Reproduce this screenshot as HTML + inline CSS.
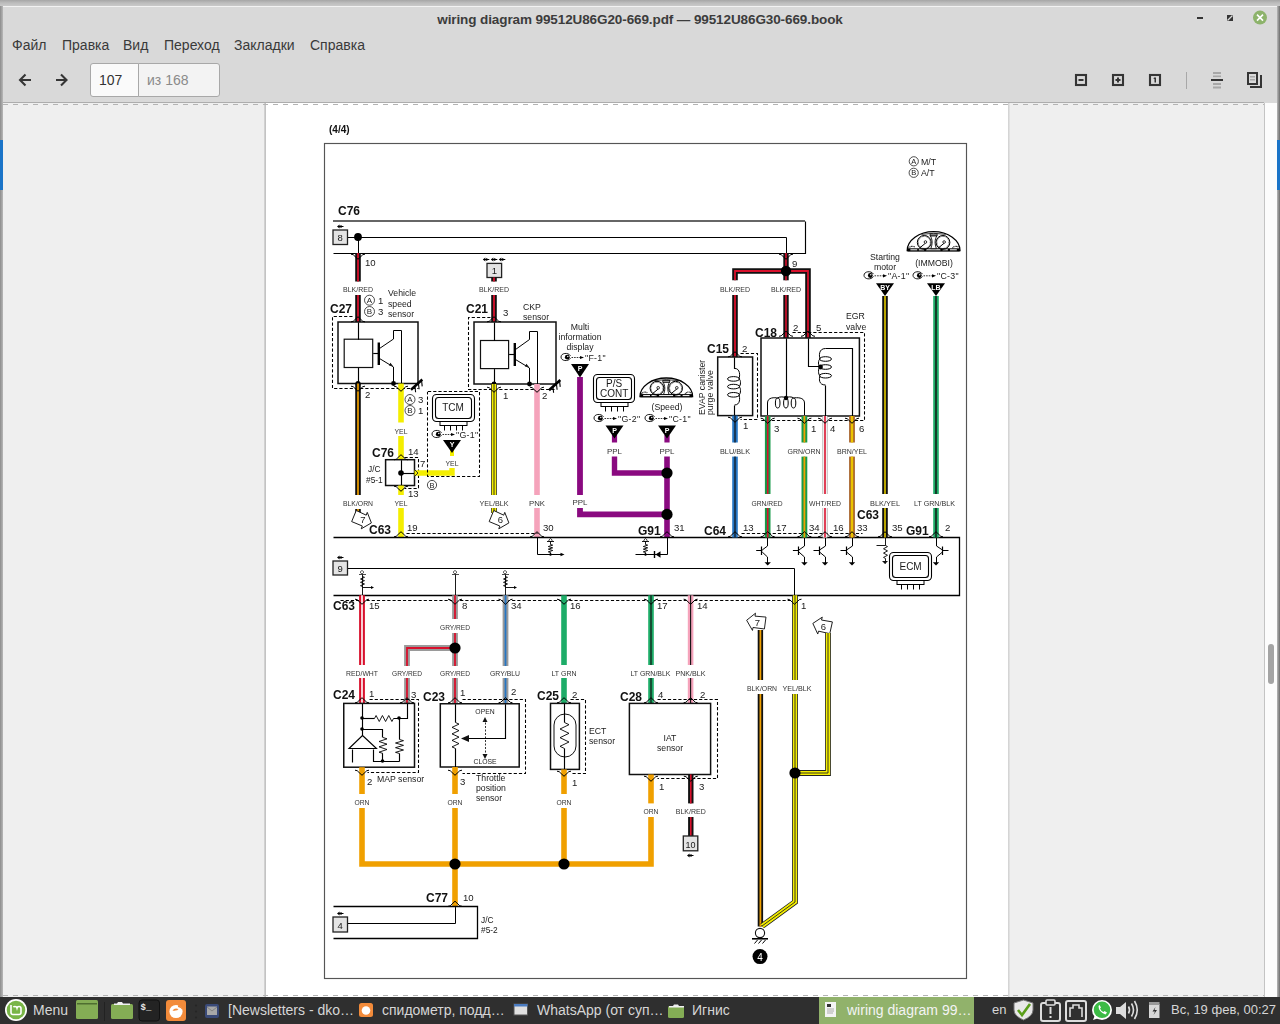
<!DOCTYPE html>
<html><head><meta charset="utf-8">
<style>
*{margin:0;padding:0;box-sizing:border-box}
html,body{width:1280px;height:1024px;overflow:hidden;background:#9a9a9a;font-family:"Liberation Sans",sans-serif}
.abs{position:absolute}
#desk{left:0;top:0;width:1280px;height:1024px;background:linear-gradient(#a6a6a6,#bdbdbd 3px,#c9c9c9 6px)}
#blueL{left:0;top:140px;width:3px;height:50px;background:#1a74c8}
#blueR{left:1277px;top:140px;width:3px;height:50px;background:#1a74c8}
#sideL{left:0;top:6px;width:3px;height:991px;background:linear-gradient(90deg,#8c8c8c,#b8b8b8)}
#sideR{left:1277px;top:6px;width:3px;height:991px;background:linear-gradient(90deg,#b8b8b8,#6c6c6c)}
#win{left:3px;top:6px;width:1274px;height:991px;background:#d9d9d9;border-top:1px solid #f2f2f2}
#title{left:0;top:12px;width:1280px;text-align:center;font-weight:bold;font-size:13.5px;color:#3c3c3c;letter-spacing:-0.1px}
.menu{top:37px;font-size:14px;color:#3a3a3a;white-space:nowrap}
#content{left:3px;top:102px;width:1261px;height:895px;background:#efefef;border-top:1px solid #adadad}
#page{left:266px;top:103px;width:742px;height:894px;background:#fff}
#pgL{left:264px;top:103px;width:2px;height:894px;background:linear-gradient(90deg,#d8d8d8,#bcbcbc)}
#pgR{left:1008px;top:103px;width:2px;height:894px;background:linear-gradient(90deg,#cfcfcf,#e6e6e6)}
#scroll{left:1264px;top:103px;width:13px;height:894px;background:#fcfcfc;border-left:1px solid #c4c4c4}
#thumb{left:1268px;top:644px;width:6px;height:40px;background:#a4a4a4;border-radius:3px}
.dash{left:3px;width:1261px;height:1px;background:repeating-linear-gradient(90deg,#b4b4b4 0 5px,transparent 5px 10px)}
#task{left:0;top:997px;width:1280px;height:27px;background:#2f2f2f}
.tt{top:1002px;font-size:14px;color:#d6d6d6;white-space:nowrap}
#inp1{left:90px;top:63px;width:49px;height:34px;background:#fafafa;border:1px solid #a8a8a8;border-radius:3px 0 0 3px}
#inp2{left:138px;top:63px;width:82px;height:34px;background:#f3f3f3;border:1px solid #a8a8a8;border-radius:0 3px 3px 0}
</style></head><body>
<div class="abs" id="desk"></div>
<div class="abs" id="sideL"></div>
<div class="abs" id="sideR"></div>
<div class="abs" id="blueL"></div>
<div class="abs" id="blueR"></div>
<div class="abs" id="win"></div>
<div class="abs" id="title">wiring diagram 99512U86G20-669.pdf — 99512U86G30-669.book</div>
<div class="abs menu" style="left:12px">Файл</div>
<div class="abs menu" style="left:62px">Правка</div>
<div class="abs menu" style="left:123px">Вид</div>
<div class="abs menu" style="left:164px">Переход</div>
<div class="abs menu" style="left:234px">Закладки</div>
<div class="abs menu" style="left:310px">Справка</div>
<div class="abs" id="inp1"></div>
<div class="abs" id="inp2"></div>
<div class="abs" style="left:99px;top:72px;font-size:14px;color:#333">107</div>
<div class="abs" style="left:147px;top:72px;font-size:14px;color:#8a8a8a">из 168</div>
<svg class="abs" style="left:0;top:0" width="1280" height="100">
 <g fill="none" stroke="#353535" stroke-width="2.1">
  <path d="M31,80 H20.5 M25.5,74.5 L20,80 L25.5,85.5"/>
  <path d="M56,80 H66.5 M61,74.5 L66.5,80 L61,85.5"/>
  <rect x="1076" y="75" width="10" height="10"/>
  <rect x="1113" y="75" width="10" height="10"/>
  <rect x="1150" y="75" width="10" height="10"/>
 </g>
 <g fill="#353535">
  <rect x="1078.5" y="79" width="5" height="2"/>
  <rect x="1115.5" y="79" width="5" height="2"/><rect x="1117" y="77.5" width="2" height="5"/>
  <path d="M1154,77.5 h2 v5 h-1.5 v-3.5 h-1 z"/>
  <rect x="1211" y="79" width="12" height="2"/>
  <rect x="1247" y="72" width="2" height="13"/><rect x="1247" y="72" width="11" height="2"/><rect x="1256" y="72" width="2" height="13"/><rect x="1247" y="83" width="11" height="2"/>
  <rect x="1250" y="86" width="12" height="2"/><rect x="1260" y="75" width="2" height="13"/>
  <rect x="1197" y="17" width="6" height="2"/>
  <path d="M1227,15 h6 v6 h-6 z" />
 </g>
 <path d="M1227.5,20.5 L1232.5,15.5" stroke="#d9d9d9" stroke-width="1.3"/>
 <g fill="#a8a8a8">
  <rect x="1213" y="72" width="8" height="2"/><rect x="1213" y="75.5" width="8" height="1.6"/>
  <rect x="1213" y="83" width="8" height="2"/><rect x="1213" y="86.5" width="8" height="2"/>
  <rect x="1250" y="76" width="5" height="1.5"/><rect x="1250" y="79" width="5" height="1.5"/>
  <rect x="1186" y="72" width="1" height="17"/>
 </g>
 <circle cx="1260" cy="17.6" r="7" fill="#8db36b"/>
 <path d="M1257,14.6 L1263,20.6 M1263,14.6 L1257,20.6" stroke="#fff" stroke-width="1.6"/>
</svg>
<div class="abs" id="content"></div>
<div class="abs" id="pgL"></div>
<div class="abs" id="page"></div>
<div class="abs" id="pgR"></div>
<div class="abs" id="scroll"></div>
<div class="abs" id="thumb"></div>
<div class="abs dash" style="top:104px"></div>
<div class="abs dash" style="top:995px"></div>
<svg class="abs" style="left:0;top:0;will-change:transform" width="1280" height="1024" viewBox="0 0 1280 1024" font-family="Liberation Sans, sans-serif"><text x="329" y="133" font-size="10" text-anchor="start" font-weight="bold" fill="#111">(4/4)</text>
<rect x="324.5" y="143.5" width="642" height="835" rx="0" fill="none" stroke="#555" stroke-width="1.15"/>
<circle cx="913.8" cy="161.3" r="4.6" fill="none" stroke="#222" stroke-width="0.8"/>
<text x="913.8" y="163.8" font-size="7.5" text-anchor="middle" fill="#1a1a1a">A</text>
<text x="921" y="164.5" font-size="8.8" text-anchor="start" fill="#1a1a1a">M/T</text>
<circle cx="913.7" cy="172.8" r="4.6" fill="none" stroke="#222" stroke-width="0.8"/>
<text x="913.7" y="175.3" font-size="7.5" text-anchor="middle" fill="#1a1a1a">B</text>
<text x="921" y="176" font-size="8.8" text-anchor="start" fill="#1a1a1a">A/T</text>
<text x="338" y="215" font-size="12" text-anchor="start" font-weight="bold" fill="#111">C76</text>
<path d="M333,221 L805,221" fill="none" stroke="#333" stroke-width="1.6"/>
<path d="M805.5,221.5 L805.5,253.5 L333.5,253.5" fill="none" stroke="#000" stroke-width="1.15"/>
<rect x="333" y="230" width="14.5" height="14.5" rx="0" fill="#e4e4e4" stroke="#222" stroke-width="1.3"/>
<text x="340.25" y="241.2" font-size="9.5" text-anchor="middle" fill="#1a1a1a">8</text>
<path d="M338,226.5 h5.5 M341,225 v3" stroke="#000" stroke-width="1" fill="none"/>
<path d="M337,226.5 l2.6,-2 v4 z" fill="#000"/>
<path d="M348,237.5 L786.5,237.5 L786.5,253.5" fill="none" stroke="#000" stroke-width="1"/>
<circle cx="358" cy="237" r="3.9" fill="#000"/>
<path d="M358.5,237.5 L358.5,253.5" fill="none" stroke="#000" stroke-width="1"/>
<path d="M358,253 L358,281.5" fill="none" stroke="#111" stroke-width="5.6" stroke-linejoin="miter" stroke-linecap="butt"/>
<path d="M358,253 L358,281.5" fill="none" stroke="#d8102c" stroke-width="1.8" stroke-linejoin="miter"/>
<path d="M358,295 L358,322" fill="none" stroke="#111" stroke-width="5.6" stroke-linejoin="miter" stroke-linecap="butt"/>
<path d="M358,295 L358,322" fill="none" stroke="#d8102c" stroke-width="1.8" stroke-linejoin="miter"/>
<text x="365" y="265.5" font-size="9.6" text-anchor="start" fill="#1a1a1a">10</text>
<text x="358" y="292" font-size="7.4" text-anchor="middle" fill="#333" textLength="30" lengthAdjust="spacingAndGlyphs">BLK/RED</text>
<text x="330" y="313" font-size="12" text-anchor="start" font-weight="bold" fill="#111">C27</text>
<circle cx="369.5" cy="300.2" r="5" fill="none" stroke="#222" stroke-width="0.8"/>
<text x="369.5" y="302.7" font-size="8" text-anchor="middle" fill="#1a1a1a">A</text>
<text x="378" y="304" font-size="9.6" text-anchor="start" fill="#1a1a1a">1</text>
<circle cx="369.5" cy="311.5" r="5" fill="none" stroke="#222" stroke-width="0.8"/>
<text x="369.5" y="314" font-size="8" text-anchor="middle" fill="#1a1a1a">B</text>
<text x="378" y="315" font-size="9.6" text-anchor="start" fill="#1a1a1a">3</text>
<text x="388" y="296" font-size="8.7" text-anchor="start" fill="#1a1a1a">Vehicle</text>
<text x="388" y="306.5" font-size="8.7" text-anchor="start" fill="#1a1a1a">speed</text>
<text x="388" y="317" font-size="8.7" text-anchor="start" fill="#1a1a1a">sensor</text>
<path d="M352.5,316.5 L332.5,316.5 L332.5,388.5 L418.5,388.5" fill="none" stroke="#000" stroke-width="1.05" stroke-dasharray="3.2,2"/>
<rect x="338" y="322" width="80" height="61.5" rx="0" fill="none" stroke="#111" stroke-width="1.5"/>
<rect x="344.2" y="339.2" width="28.5" height="28.3" rx="0" fill="none" stroke="#111" stroke-width="1.2"/>
<path d="M358.5,322.5 L358.5,339.7" fill="none" stroke="#000" stroke-width="1.15"/>
<path d="M358.5,368 L358.5,384" fill="none" stroke="#000" stroke-width="1.15"/>
<path d="M373.2,353.5 L378.5,353.5" fill="none" stroke="#000" stroke-width="1.15"/>
<path d="M378.8,342.5 L378.8,365" fill="none" stroke="#000" stroke-width="2.4"/>
<path d="M379.5,348.5 L393.5,339 L393.5,330.5 L401.5,330.5 L401.5,384" fill="none" stroke="#000" stroke-width="1"/>
<path d="M379.5,358.5 L393.5,367 L393.5,384" fill="none" stroke="#000" stroke-width="1"/>
<path d="M393,366 l-4.2,-0.6 l1.6,-2.6 z" fill="#111"/>
<circle cx="393.5" cy="383.5" r="2.4" fill="#000"/>
<circle cx="358" cy="383.5" r="2.6" fill="#000"/>
<path d="M411,389.7 L422.3,379.5" stroke="#000" stroke-width="2.5"/>
<path d="M415,386.7 l0.6,5.6" stroke="#000" stroke-width="1.1"/>
<path d="M418.5,383.7 l0.6,5.6" stroke="#000" stroke-width="1.1"/>
<path d="M421.6,380.8 l0.6,5.6" stroke="#000" stroke-width="1.1"/>
<text x="365" y="398" font-size="9.6" text-anchor="start" fill="#1a1a1a">2</text>
<circle cx="410" cy="399.5" r="5" fill="none" stroke="#222" stroke-width="0.8"/>
<text x="410" y="402" font-size="8" text-anchor="middle" fill="#1a1a1a">A</text>
<text x="418" y="403" font-size="9.6" text-anchor="start" fill="#1a1a1a">3</text>
<circle cx="410" cy="410.5" r="5" fill="none" stroke="#222" stroke-width="0.8"/>
<text x="410" y="413" font-size="8" text-anchor="middle" fill="#1a1a1a">B</text>
<text x="418" y="414" font-size="9.6" text-anchor="start" fill="#1a1a1a">1</text>
<path d="M358,383.5 L358,495" fill="none" stroke="#111" stroke-width="5.6" stroke-linejoin="miter" stroke-linecap="butt"/>
<path d="M358,383.5 L358,495" fill="none" stroke="#f0a000" stroke-width="1.7" stroke-linejoin="miter"/>
<path d="M358,509 L358,514" fill="none" stroke="#111" stroke-width="5.6" stroke-linejoin="miter" stroke-linecap="butt"/>
<path d="M358,509 L358,514" fill="none" stroke="#f0a000" stroke-width="1.7" stroke-linejoin="miter"/>
<text x="358" y="506" font-size="7.4" text-anchor="middle" fill="#333" textLength="30" lengthAdjust="spacingAndGlyphs">BLK/ORN</text>
<g transform="translate(362,519.5) rotate(20) scale(-1,1)"><path d="M-10,0 L-2.5,-8.5 L-2.5,-5.5 L8.5,-6.5 L9,5.5 L-2.5,6 L-2.5,9 Z" fill="#fff" stroke="#1a1a1a" stroke-width="0.9"/></g>
<text x="363" y="523.1" font-size="9.5" text-anchor="middle" fill="#1a1a1a">7</text>
<path d="M401,383.5 L401,422.5" fill="none" stroke="#f4ee00" stroke-width="5.6" stroke-linejoin="miter" stroke-linecap="butt"/>
<path d="M401,436 L401,460" fill="none" stroke="#f4ee00" stroke-width="5.6" stroke-linejoin="miter" stroke-linecap="butt"/>
<text x="401" y="434" font-size="7.4" text-anchor="middle" fill="#333" textLength="13" lengthAdjust="spacingAndGlyphs">YEL</text>
<text x="372" y="457" font-size="12" text-anchor="start" font-weight="bold" fill="#111">C76</text>
<text x="408" y="454.5" font-size="9.6" text-anchor="start" fill="#1a1a1a">14</text>
<rect x="385.6" y="459.7" width="28.9" height="25.8" rx="0" fill="none" stroke="#111" stroke-width="1.5"/>
<path d="M401.5,460.2 L401.5,486" fill="none" stroke="#000" stroke-width="1.15"/>
<path d="M401.5,473.5 L415,473.5" fill="none" stroke="#000" stroke-width="1.15"/>
<circle cx="401" cy="473" r="2.8" fill="#000"/>
<path d="M404.5,457.5 L418.5,457.5 L418.5,488.5 L404.5,488.5" fill="none" stroke="#000" stroke-width="1.05" stroke-dasharray="3.2,2"/>
<text x="368" y="472" font-size="8.4" text-anchor="start" fill="#1a1a1a">J/C</text>
<text x="366" y="482.5" font-size="8.4" text-anchor="start" fill="#1a1a1a">#5-1</text>
<text x="420" y="467" font-size="9.6" text-anchor="start" fill="#1a1a1a">7</text>
<text x="408" y="497" font-size="9.6" text-anchor="start" fill="#1a1a1a">13</text>
<path d="M401,485.5 L401,495" fill="none" stroke="#f4ee00" stroke-width="5.6" stroke-linejoin="miter" stroke-linecap="butt"/>
<path d="M401,508 L401,537.5" fill="none" stroke="#f4ee00" stroke-width="5.6" stroke-linejoin="miter" stroke-linecap="butt"/>
<text x="401" y="506" font-size="7.4" text-anchor="middle" fill="#333" textLength="13" lengthAdjust="spacingAndGlyphs">YEL</text>
<circle cx="432" cy="485" r="4.6" fill="none" stroke="#222" stroke-width="0.8"/>
<text x="432" y="487.5" font-size="7.5" text-anchor="middle" fill="#1a1a1a">B</text>
<path d="M414.5,473 L452,473 L452,468" fill="none" stroke="#f4ee00" stroke-width="5.4" stroke-linejoin="miter" stroke-linecap="butt"/>
<path d="M452,450 L452,456" fill="none" stroke="#f4ee00" stroke-width="4" stroke-linejoin="miter" stroke-linecap="butt"/>
<text x="452" y="466" font-size="7.4" text-anchor="middle" fill="#333" textLength="13" lengthAdjust="spacingAndGlyphs">YEL</text>
<path d="M414.5,469.5 l3.5,3.5 l-3.5,3.5" fill="none" stroke="#222" stroke-width="0.9"/>
<path d="M428,391.5 L479.5,391.5 L479.5,476.5 L427.5,476.5 L427.5,391.8" fill="none" stroke="#000" stroke-width="1.05" stroke-dasharray="3.2,2"/>
<rect x="432.5" y="394.5" width="42" height="27" rx="4" fill="#fff" stroke="#000" stroke-width="1.1"/>
<rect x="435.5" y="397.5" width="36" height="21" rx="3" fill="none" stroke="#000" stroke-width="1.1"/>
<rect x="440" y="421.5" width="27" height="4" rx="0" fill="#fff" stroke="#000" stroke-width="1"/>
<path d="M444.5,425.5 v5" stroke="#000" stroke-width="1"/>
<path d="M450.5,425.5 v5" stroke="#000" stroke-width="1"/>
<path d="M456.5,425.5 v5" stroke="#000" stroke-width="1"/>
<path d="M462.5,425.5 v5" stroke="#000" stroke-width="1"/>
<text x="453" y="411.3" font-size="10" text-anchor="middle" fill="#1a1a1a">TCM</text>
<path d="M441.5,432.8 C439,429 432,430 432,434 M441.5,435.2 C439,439 432,438 432,434" fill="none" stroke="#000" stroke-width="0.9"/>
<circle cx="438.3" cy="434.2" r="2.4" fill="#000"/>
<circle cx="438.8" cy="433.5" r="0.7" fill="#fff"/>
<path d="M442.5,434.5 h10" stroke="#000" stroke-width="0.8" stroke-dasharray="1.6,1"/>
<path d="M455,434.5 l-4,-1.6 v3.2 z" fill="#000"/>
<text x="456" y="437.8" font-size="8.8" text-anchor="start" fill="#1a1a1a" letter-spacing="0.3">"G-1"</text>
<rect x="487" y="263.4" width="14.6" height="14.1" rx="0" fill="#e4e4e4" stroke="#222" stroke-width="1.3"/>
<text x="494.3" y="274.2" font-size="9.5" text-anchor="middle" fill="#1a1a1a">1</text>
<path d="M483.8,259.5 h5.5 M486.8,258 v3" stroke="#000" stroke-width="1" fill="none"/>
<path d="M482.8,259.5 l2.6,-2 v4 z" fill="#000"/>
<path d="M491.8,259.5 h5.5 M494.8,258 v3" stroke="#000" stroke-width="1" fill="none"/>
<path d="M490.8,259.5 l2.6,-2 v4 z" fill="#000"/>
<path d="M499.8,259.5 h5.5 M502.8,258 v3" stroke="#000" stroke-width="1" fill="none"/>
<path d="M498.8,259.5 l2.6,-2 v4 z" fill="#000"/>
<path d="M494,277.5 L494,281.5" fill="none" stroke="#111" stroke-width="5.6" stroke-linejoin="miter" stroke-linecap="butt"/>
<path d="M494,277.5 L494,281.5" fill="none" stroke="#d8102c" stroke-width="1.8" stroke-linejoin="miter"/>
<path d="M494,295 L494,322" fill="none" stroke="#111" stroke-width="5.6" stroke-linejoin="miter" stroke-linecap="butt"/>
<path d="M494,295 L494,322" fill="none" stroke="#d8102c" stroke-width="1.8" stroke-linejoin="miter"/>
<text x="494" y="292" font-size="7.4" text-anchor="middle" fill="#333" textLength="30" lengthAdjust="spacingAndGlyphs">BLK/RED</text>
<text x="466" y="313" font-size="12" text-anchor="start" font-weight="bold" fill="#111">C21</text>
<text x="503" y="315.5" font-size="9.6" text-anchor="start" fill="#1a1a1a">3</text>
<text x="523" y="310" font-size="8.7" text-anchor="start" fill="#1a1a1a">CKP</text>
<text x="523" y="319.5" font-size="8.7" text-anchor="start" fill="#1a1a1a">sensor</text>
<path d="M490.5,317.5 L468.5,317.5 L468.5,389.5 L556.5,389.5" fill="none" stroke="#000" stroke-width="1.05" stroke-dasharray="3.2,2"/>
<rect x="474" y="322" width="82" height="62" rx="0" fill="none" stroke="#111" stroke-width="1.5"/>
<rect x="480.5" y="340.5" width="28.1" height="28.1" rx="0" fill="none" stroke="#111" stroke-width="1.2"/>
<path d="M494.5,322.5 L494.5,341" fill="none" stroke="#000" stroke-width="1.15"/>
<path d="M494.5,369.1 L494.5,384.5" fill="none" stroke="#000" stroke-width="1.15"/>
<path d="M509.1,354.5 L514.5,354.5" fill="none" stroke="#000" stroke-width="1.15"/>
<path d="M514.8,343 L514.8,366" fill="none" stroke="#000" stroke-width="2.4"/>
<path d="M515.5,349.5 L529.5,339.5 L529.5,331.5 L537.5,331.5 L537.5,384.5" fill="none" stroke="#000" stroke-width="1"/>
<path d="M515.5,359.5 L529.5,368 L529.5,384.5" fill="none" stroke="#000" stroke-width="1"/>
<path d="M529,367 l-4.2,-0.6 l1.6,-2.6 z" fill="#111"/>
<circle cx="529.5" cy="384" r="2.4" fill="#000"/>
<circle cx="494" cy="384" r="2.4" fill="#000"/>
<path d="M549,390.2 L560.3,380" stroke="#000" stroke-width="2.5"/>
<path d="M553,387.2 l0.6,5.6" stroke="#000" stroke-width="1.1"/>
<path d="M556.5,384.2 l0.6,5.6" stroke="#000" stroke-width="1.1"/>
<path d="M559.6,381.3 l0.6,5.6" stroke="#000" stroke-width="1.1"/>
<path d="M494,384 L494,495" fill="none" stroke="#222" stroke-width="5.8" stroke-linejoin="miter" stroke-linecap="butt"/>
<path d="M494,384 L494,495" fill="none" stroke="#f4ee00" stroke-width="4.4" stroke-linejoin="miter"/>
<path d="M494,508 L494,513" fill="none" stroke="#222" stroke-width="5.8" stroke-linejoin="miter" stroke-linecap="butt"/>
<path d="M494,508 L494,513" fill="none" stroke="#f4ee00" stroke-width="4.4" stroke-linejoin="miter"/>
<path d="M494,384 L494,495" fill="none" stroke="#222" stroke-width="0.9" stroke-linejoin="miter" stroke-linecap="butt"/>
<path d="M494,508 L494,513" fill="none" stroke="#222" stroke-width="0.9" stroke-linejoin="miter" stroke-linecap="butt"/>
<text x="494" y="506" font-size="7.4" text-anchor="middle" fill="#333" textLength="29" lengthAdjust="spacingAndGlyphs">YEL/BLK</text>
<g transform="translate(499.5,519.5) rotate(20) scale(-1,1)"><path d="M-10,0 L-2.5,-8.5 L-2.5,-5.5 L8.5,-6.5 L9,5.5 L-2.5,6 L-2.5,9 Z" fill="#fff" stroke="#1a1a1a" stroke-width="0.9"/></g>
<text x="500.5" y="523.1" font-size="9.5" text-anchor="middle" fill="#1a1a1a">6</text>
<text x="503" y="398.5" font-size="9.6" text-anchor="start" fill="#1a1a1a">1</text>
<path d="M537,384 L537,495" fill="none" stroke="#f5a3bb" stroke-width="5.6" stroke-linejoin="miter" stroke-linecap="butt"/>
<path d="M537,508 L537,537.5" fill="none" stroke="#f5a3bb" stroke-width="5.6" stroke-linejoin="miter" stroke-linecap="butt"/>
<text x="537" y="506" font-size="7.4" text-anchor="middle" fill="#333" textLength="16" lengthAdjust="spacingAndGlyphs">PNK</text>
<text x="542" y="398.5" font-size="9.6" text-anchor="start" fill="#1a1a1a">2</text>
<text x="580" y="330" font-size="8.7" text-anchor="middle" fill="#1a1a1a">Multi</text>
<text x="580" y="340" font-size="8.7" text-anchor="middle" fill="#1a1a1a">information</text>
<text x="580" y="350" font-size="8.7" text-anchor="middle" fill="#1a1a1a">display</text>
<path d="M570.5,355.8 C568,352 561,353 561,357 M570.5,358.2 C568,362 561,361 561,357" fill="none" stroke="#000" stroke-width="0.9"/>
<circle cx="567.3" cy="357.2" r="2.4" fill="#000"/>
<circle cx="567.8" cy="356.5" r="0.7" fill="#fff"/>
<path d="M571.5,357.5 h10" stroke="#000" stroke-width="0.8" stroke-dasharray="1.6,1"/>
<path d="M584,357.5 l-4,-1.6 v3.2 z" fill="#000"/>
<text x="585" y="360.8" font-size="8.8" text-anchor="start" fill="#1a1a1a" letter-spacing="0.3">"F-1"</text>
<path d="M580,377 L580,495" fill="none" stroke="#8a0a80" stroke-width="5.8" stroke-linejoin="miter" stroke-linecap="butt"/>
<text x="580" y="505" font-size="7.4" text-anchor="middle" fill="#333" textLength="15" lengthAdjust="spacingAndGlyphs">PPL</text>
<path d="M580,508 L580,514.4 L667,514.4" fill="none" stroke="#8a0a80" stroke-width="5.8" stroke-linejoin="miter" stroke-linecap="butt"/>
<rect x="593.5" y="374.5" width="41" height="28" rx="4" fill="#fff" stroke="#000" stroke-width="1.1"/>
<rect x="596.5" y="377.5" width="35" height="22" rx="3" fill="none" stroke="#000" stroke-width="1.1"/>
<rect x="601" y="402.5" width="27" height="4" rx="0" fill="#fff" stroke="#000" stroke-width="1"/>
<path d="M605.5,406.5 v5" stroke="#000" stroke-width="1"/>
<path d="M611.5,406.5 v5" stroke="#000" stroke-width="1"/>
<path d="M617.5,406.5 v5" stroke="#000" stroke-width="1"/>
<path d="M623.5,406.5 v5" stroke="#000" stroke-width="1"/>
<text x="614.1" y="387" font-size="10" text-anchor="middle" fill="#1a1a1a">P/S</text>
<text x="614.1" y="397" font-size="10" text-anchor="middle" fill="#1a1a1a">CONT</text>
<path d="M603.5,416.8 C601,413 594,414 594,418 M603.5,419.2 C601,423 594,422 594,418" fill="none" stroke="#000" stroke-width="0.9"/>
<circle cx="600.3" cy="418.2" r="2.4" fill="#000"/>
<circle cx="600.8" cy="417.5" r="0.7" fill="#fff"/>
<path d="M604.5,418.5 h10" stroke="#000" stroke-width="0.8" stroke-dasharray="1.6,1"/>
<path d="M617,418.5 l-4,-1.6 v3.2 z" fill="#000"/>
<text x="618" y="421.8" font-size="8.8" text-anchor="start" fill="#1a1a1a" letter-spacing="0.3">"G-2"</text>
<path d="M614.5,435 L614.5,442.5" fill="none" stroke="#8a0a80" stroke-width="5.2" stroke-linejoin="miter" stroke-linecap="butt"/>
<text x="614.5" y="454" font-size="7.4" text-anchor="middle" fill="#333" textLength="15" lengthAdjust="spacingAndGlyphs">PPL</text>
<path d="M614.5,456.5 L614.5,473 L667,473" fill="none" stroke="#8a0a80" stroke-width="5.4" stroke-linejoin="miter" stroke-linecap="butt"/>
<path d="M640,396.5 A26.3,18.5 0 0 1 692.6,396.5 Z" fill="#fff" stroke="#000" stroke-width="1.3"/>
<rect x="640.3" y="394.1" width="52" height="3.2" fill="#000"/>
<rect x="643.16" y="395.1" width="6.84" height="1" fill="#fff"/>
<rect x="651.57" y="395.1" width="5.26" height="1" fill="#fff"/>
<rect x="658.94" y="395.1" width="14.2" height="1" fill="#fff"/>
<rect x="675.24" y="395.1" width="5.26" height="1" fill="#fff"/>
<rect x="682.61" y="395.1" width="6.84" height="1" fill="#fff"/>
<path d="M654.3,380.6 Q666.3,378.6 678.3,380.6" fill="none" stroke="#000" stroke-width="0.8"/>
<path d="M663.1,382.2 C665.3,386 665.3,390 663.5,394.5 H669.1 C667.3,390 667.3,386 669.5,382.2 Z" fill="#fff" stroke="#000" stroke-width="0.9"/>
<rect x="662.8" y="380.4" width="7" height="1.6" fill="#fff" stroke="#000" stroke-width="0.8"/>
<circle cx="657" cy="388.2" r="6.9" fill="none" stroke="#000" stroke-width="1"/>
<circle cx="657" cy="388.2" r="6" fill="none" stroke="#000" stroke-width="0.8" stroke-dasharray="0.7,0.7"/>
<path d="M652.5,393.7 L658.3,388.9" fill="none" stroke="#000" stroke-width="1"/>
<circle cx="658.2" cy="387.8" r="1.3" fill="#fff" stroke="#000" stroke-width="0.8"/>
<circle cx="675.6" cy="388.2" r="6.9" fill="none" stroke="#000" stroke-width="1"/>
<circle cx="675.6" cy="388.2" r="6" fill="none" stroke="#000" stroke-width="0.8" stroke-dasharray="0.7,0.7"/>
<path d="M671.1,393.7 L676.9,388.9" fill="none" stroke="#000" stroke-width="1"/>
<circle cx="676.8" cy="387.8" r="1.3" fill="#fff" stroke="#000" stroke-width="0.8"/>
<path d="M641.5,394 a4,4 0 0 1 6,-1" fill="none" stroke="#000" stroke-width="1.1" stroke-dasharray="0.9,0.5"/>
<path d="M685.1,394 a4,4 0 0 1 6,-1" fill="none" stroke="#000" stroke-width="1.1" stroke-dasharray="0.9,0.5"/>
<text x="667" y="409.5" font-size="8.7" text-anchor="middle" fill="#1a1a1a">(Speed)</text>
<path d="M654.5,416.8 C652,413 645,414 645,418 M654.5,419.2 C652,423 645,422 645,418" fill="none" stroke="#000" stroke-width="0.9"/>
<circle cx="651.3" cy="418.2" r="2.4" fill="#000"/>
<circle cx="651.8" cy="417.5" r="0.7" fill="#fff"/>
<path d="M655.5,418.5 h10" stroke="#000" stroke-width="0.8" stroke-dasharray="1.6,1"/>
<path d="M668,418.5 l-4,-1.6 v3.2 z" fill="#000"/>
<text x="669" y="421.8" font-size="8.8" text-anchor="start" fill="#1a1a1a" letter-spacing="0.3">"C-1"</text>
<path d="M667,435 L667,442.5" fill="none" stroke="#8a0a80" stroke-width="5.2" stroke-linejoin="miter" stroke-linecap="butt"/>
<text x="667" y="454" font-size="7.4" text-anchor="middle" fill="#333" textLength="15" lengthAdjust="spacingAndGlyphs">PPL</text>
<path d="M667,456.5 L667,537.5" fill="none" stroke="#8a0a80" stroke-width="5.6" stroke-linejoin="miter" stroke-linecap="butt"/>
<circle cx="667" cy="473" r="5.6" fill="#000"/>
<circle cx="667" cy="514.4" r="5.6" fill="#000"/>
<path d="M406.5,533.5 L537.5,533.5" fill="none" stroke="#000" stroke-width="1" stroke-dasharray="3.2,2"/>
<text x="369" y="533.5" font-size="12" text-anchor="start" font-weight="bold" fill="#111">C63</text>
<text x="407" y="531" font-size="9.6" text-anchor="start" fill="#1a1a1a">19</text>
<text x="543" y="531" font-size="9.6" text-anchor="start" fill="#1a1a1a">30</text>
<text x="638" y="534.5" font-size="12" text-anchor="start" font-weight="bold" fill="#111">G91</text>
<text x="674" y="531" font-size="9.6" text-anchor="start" fill="#1a1a1a">31</text>
<text x="704" y="534.5" font-size="12" text-anchor="start" font-weight="bold" fill="#111">C64</text>
<path d="M741.5,533.5 L862.5,533.5" fill="none" stroke="#000" stroke-width="1" stroke-dasharray="3.2,2"/>
<text x="743" y="531" font-size="9.6" text-anchor="start" fill="#1a1a1a">13</text>
<text x="776" y="531" font-size="9.6" text-anchor="start" fill="#1a1a1a">17</text>
<text x="809" y="531" font-size="9.6" text-anchor="start" fill="#1a1a1a">34</text>
<text x="833" y="531" font-size="9.6" text-anchor="start" fill="#1a1a1a">16</text>
<text x="857" y="531" font-size="9.6" text-anchor="start" fill="#1a1a1a">33</text>
<text x="857" y="518.5" font-size="12" text-anchor="start" font-weight="bold" fill="#111">C63</text>
<text x="892" y="531" font-size="9.6" text-anchor="start" fill="#1a1a1a">35</text>
<text x="906" y="534.5" font-size="12" text-anchor="start" font-weight="bold" fill="#111">G91</text>
<text x="945" y="531" font-size="9.6" text-anchor="start" fill="#1a1a1a">2</text>
<path d="M333.5,537.5 L959.5,537.5 L959.5,595.5 L333.5,595.5" fill="none" stroke="#000" stroke-width="1.3"/>
<rect x="333" y="561" width="14.5" height="14" rx="0" fill="#e4e4e4" stroke="#222" stroke-width="1.3"/>
<text x="340.25" y="571.7" font-size="9.5" text-anchor="middle" fill="#1a1a1a">9</text>
<path d="M338,557.5 h5.5 M341,556 v3" stroke="#000" stroke-width="1" fill="none"/>
<path d="M337,557.5 l2.6,-2 v4 z" fill="#000"/>
<path d="M348,568.5 L794.5,568.5 L794.5,595.8" fill="none" stroke="#000" stroke-width="1"/>
<rect x="889.5" y="552.5" width="42" height="28" rx="4" fill="#fff" stroke="#000" stroke-width="1.1"/>
<rect x="892.5" y="555.5" width="36" height="22" rx="3" fill="none" stroke="#000" stroke-width="1.1"/>
<rect x="897" y="580.5" width="27" height="4" rx="0" fill="#fff" stroke="#000" stroke-width="1"/>
<path d="M901.5,584.5 v5" stroke="#000" stroke-width="1"/>
<path d="M907.5,584.5 v5" stroke="#000" stroke-width="1"/>
<path d="M913.5,584.5 v5" stroke="#000" stroke-width="1"/>
<path d="M919.5,584.5 v5" stroke="#000" stroke-width="1"/>
<text x="910.6" y="570.15" font-size="10" text-anchor="middle" fill="#1a1a1a">ECM</text>
<path d="M537.5,538 L537.5,554.5 L562.5,554.5" fill="none" stroke="#000" stroke-width="1"/>
<path d="M564.5,554.5 l-4,-1.8 v3.6 z" fill="#000"/>
<path d="M550.5,542 l-1.8,-1.8 l1.8,-1.8 l1.8,1.8 z" fill="#fff" stroke="#000" stroke-width="0.8"/>
<path d="M547,541.5 L554,541.5" fill="none" stroke="#000" stroke-width="0.9"/>
<path d="M550.5,542 L550.5,544.5" fill="none" stroke="#000" stroke-width="0.9"/>
<path d="M550.5,544.5 L552.7,545.17 L548.3,546.5 L552.7,547.83 L548.3,549.17 L552.7,550.5 L548.3,551.83 L550.5,552.5" fill="none" stroke="#000" stroke-width="0.9"/>
<path d="M550.5,552.5 L550.5,554.5" fill="none" stroke="#000" stroke-width="0.9"/>
<circle cx="550.5" cy="554.5" r="1.2" fill="#000"/>
<path d="M667.5,538 L667.5,554.5 L635.5,554.5" fill="none" stroke="#000" stroke-width="1"/>
<path d="M655.5,554.5 l5,-3.2 v6.4 z" fill="#000"/>
<path d="M654.5,551 L654.5,558" fill="none" stroke="#000" stroke-width="1.4"/>
<path d="M645.5,542 l-1.8,-1.8 l1.8,-1.8 l1.8,1.8 z" fill="#fff" stroke="#000" stroke-width="0.8"/>
<path d="M642,541.5 L649,541.5" fill="none" stroke="#000" stroke-width="0.9"/>
<path d="M645.5,542 L645.5,544.5" fill="none" stroke="#000" stroke-width="0.9"/>
<path d="M645.5,544.5 L647.7,545.17 L643.3,546.5 L647.7,547.83 L643.3,549.17 L647.7,550.5 L643.3,551.83 L645.5,552.5" fill="none" stroke="#000" stroke-width="0.9"/>
<path d="M645.5,552.5 L645.5,554.5" fill="none" stroke="#000" stroke-width="0.9"/>
<circle cx="645.5" cy="554.5" r="1.2" fill="#000"/>
<path d="M767.5,538 L767.5,546 L762.2,550" fill="none" stroke="#000" stroke-width="1"/>
<path d="M761.5,546.5 L761.5,555" fill="none" stroke="#000" stroke-width="1.2"/>
<path d="M756.2,550.5 L762.2,550.5" fill="none" stroke="#000" stroke-width="1"/>
<path d="M762.2,552 L767.5,557 L767.5,564" fill="none" stroke="#000" stroke-width="1"/>
<path d="M767.7,565.5 l-3.2,-3.2 h6.4 z" fill="#000"/>
<path d="M804.5,538 L804.5,546 L798.9,550" fill="none" stroke="#000" stroke-width="1"/>
<path d="M798.5,546.5 L798.5,555" fill="none" stroke="#000" stroke-width="1.2"/>
<path d="M792.9,550.5 L798.9,550.5" fill="none" stroke="#000" stroke-width="1"/>
<path d="M798.9,552 L804.5,557 L804.5,564" fill="none" stroke="#000" stroke-width="1"/>
<path d="M804.4,565.5 l-3.2,-3.2 h6.4 z" fill="#000"/>
<path d="M825.5,538 L825.5,546 L819.5,550" fill="none" stroke="#000" stroke-width="1"/>
<path d="M819.5,546.5 L819.5,555" fill="none" stroke="#000" stroke-width="1.2"/>
<path d="M813.5,550.5 L819.5,550.5" fill="none" stroke="#000" stroke-width="1"/>
<path d="M819.5,552 L825.5,557 L825.5,564" fill="none" stroke="#000" stroke-width="1"/>
<path d="M825,565.5 l-3.2,-3.2 h6.4 z" fill="#000"/>
<path d="M852.5,538 L852.5,546 L846.5,550" fill="none" stroke="#000" stroke-width="1"/>
<path d="M846.5,546.5 L846.5,555" fill="none" stroke="#000" stroke-width="1.2"/>
<path d="M840.5,550.5 L846.5,550.5" fill="none" stroke="#000" stroke-width="1"/>
<path d="M846.5,552 L852.5,557 L852.5,564" fill="none" stroke="#000" stroke-width="1"/>
<path d="M852,565.5 l-3.2,-3.2 h6.4 z" fill="#000"/>
<path d="M936.5,538 L936.5,546 L942.5,550" fill="none" stroke="#000" stroke-width="1"/>
<path d="M942.5,546.5 L942.5,555" fill="none" stroke="#000" stroke-width="1.2"/>
<path d="M948.5,550.5 L942.5,550.5" fill="none" stroke="#000" stroke-width="1"/>
<path d="M942.5,552 L936.5,557 L936.5,564" fill="none" stroke="#000" stroke-width="1"/>
<path d="M936,565.5 l-3.2,-3.2 h6.4 z" fill="#000"/>
<path d="M876.5,545.5 L885.5,545.5" fill="none" stroke="#000" stroke-width="0.9"/>
<path d="M885.5,538 L885.5,545.5" fill="none" stroke="#000" stroke-width="0.9"/>
<path d="M885.5,545.5 L887.5,546.58 L883.5,548.75 L887.5,550.92 L883.5,553.08 L887.5,555.25 L883.5,557.42 L885.5,558.5" fill="none" stroke="#000" stroke-width="0.9"/>
<path d="M885.5,558.5 L885.5,563.5" fill="none" stroke="#000" stroke-width="0.9"/>
<path d="M885,564 l-3,-3 h6 z" fill="#111"/>
<path d="M362,574 l-2,-1.8 l2,-1.8 l2,1.8 z" fill="#fff" stroke="#111" stroke-width="0.7"/>
<path d="M359,574.5 L366,574.5" fill="none" stroke="#000" stroke-width="0.7"/>
<path d="M362.5,574.5 L362.5,595.8" fill="none" stroke="#000" stroke-width="0.9"/>
<path d="M362.5,576.5 L364.5,577.33 L360.5,579 L364.5,580.67 L360.5,582.33 L364.5,584 L360.5,585.67 L362.5,586.5" fill="none" stroke="#000" stroke-width="0.9"/>
<path d="M362.5,587.5 L371.5,587.5" fill="none" stroke="#000" stroke-width="0.9"/>
<path d="M374,587.5 l-3,-1.5 v3 z" fill="#000"/>
<path d="M455,574 l-2,-1.8 l2,-1.8 l2,1.8 z" fill="#fff" stroke="#111" stroke-width="0.7"/>
<path d="M452,574.5 L459,574.5" fill="none" stroke="#000" stroke-width="0.7"/>
<path d="M455.5,574.5 L455.5,595.8" fill="none" stroke="#000" stroke-width="0.9"/>
<path d="M505,574 l-2,-1.8 l2,-1.8 l2,1.8 z" fill="#fff" stroke="#111" stroke-width="0.7"/>
<path d="M502,574.5 L509,574.5" fill="none" stroke="#000" stroke-width="0.7"/>
<path d="M505.5,574.5 L505.5,595.8" fill="none" stroke="#000" stroke-width="0.9"/>
<path d="M505.5,576.5 L507.5,577.33 L503.5,579 L507.5,580.67 L503.5,582.33 L507.5,584 L503.5,585.67 L505.5,586.5" fill="none" stroke="#000" stroke-width="0.9"/>
<path d="M505.5,587.5 L514.5,587.5" fill="none" stroke="#000" stroke-width="0.9"/>
<path d="M517,587.5 l-3,-1.5 v3 z" fill="#000"/>
<path d="M340.5,600.5 L795,600.5" fill="none" stroke="#000" stroke-width="1" stroke-dasharray="3.2,2"/>
<text x="333" y="609.5" font-size="12" text-anchor="start" font-weight="bold" fill="#111">C63</text>
<text x="369" y="609" font-size="9.6" text-anchor="start" fill="#1a1a1a">15</text>
<text x="462" y="609" font-size="9.6" text-anchor="start" fill="#1a1a1a">8</text>
<text x="511" y="609" font-size="9.6" text-anchor="start" fill="#1a1a1a">34</text>
<text x="570" y="609" font-size="9.6" text-anchor="start" fill="#1a1a1a">16</text>
<text x="657" y="609" font-size="9.6" text-anchor="start" fill="#1a1a1a">17</text>
<text x="697" y="609" font-size="9.6" text-anchor="start" fill="#1a1a1a">14</text>
<text x="801" y="609" font-size="9.6" text-anchor="start" fill="#1a1a1a">1</text>
<path d="M362,595.3 L362,665" fill="none" stroke="#d8102c" stroke-width="5.8" stroke-linejoin="miter" stroke-linecap="butt"/>
<path d="M362,595.3 L362,665" fill="none" stroke="#ffffff" stroke-width="1.6" stroke-linejoin="miter"/>
<path d="M362,678 L362,703.4" fill="none" stroke="#d8102c" stroke-width="5.8" stroke-linejoin="miter" stroke-linecap="butt"/>
<path d="M362,678 L362,703.4" fill="none" stroke="#ffffff" stroke-width="1.6" stroke-linejoin="miter"/>
<text x="362" y="675.5" font-size="7.4" text-anchor="middle" fill="#333" textLength="32" lengthAdjust="spacingAndGlyphs">RED/WHT</text>
<path d="M455,595.3 L455,619" fill="none" stroke="#9a9a9a" stroke-width="5.8" stroke-linejoin="miter" stroke-linecap="butt"/>
<path d="M455,595.3 L455,619" fill="none" stroke="#d8102c" stroke-width="1.8" stroke-linejoin="miter"/>
<path d="M455,633 L455,666" fill="none" stroke="#9a9a9a" stroke-width="5.8" stroke-linejoin="miter" stroke-linecap="butt"/>
<path d="M455,633 L455,666" fill="none" stroke="#d8102c" stroke-width="1.8" stroke-linejoin="miter"/>
<path d="M455,678 L455,703.8" fill="none" stroke="#9a9a9a" stroke-width="5.8" stroke-linejoin="miter" stroke-linecap="butt"/>
<path d="M455,678 L455,703.8" fill="none" stroke="#d8102c" stroke-width="1.8" stroke-linejoin="miter"/>
<text x="455" y="629.5" font-size="7.4" text-anchor="middle" fill="#333" textLength="30" lengthAdjust="spacingAndGlyphs">GRY/RED</text>
<text x="455" y="675.5" font-size="7.4" text-anchor="middle" fill="#333" textLength="30" lengthAdjust="spacingAndGlyphs">GRY/RED</text>
<path d="M455,648 L407,648 L407,666" fill="none" stroke="#9a9a9a" stroke-width="5.8" stroke-linejoin="miter" stroke-linecap="butt"/>
<path d="M455,648 L407,648 L407,666" fill="none" stroke="#d8102c" stroke-width="1.8" stroke-linejoin="miter"/>
<path d="M407,678 L407,703.4" fill="none" stroke="#9a9a9a" stroke-width="5.8" stroke-linejoin="miter" stroke-linecap="butt"/>
<path d="M407,678 L407,703.4" fill="none" stroke="#d8102c" stroke-width="1.8" stroke-linejoin="miter"/>
<text x="407" y="675.5" font-size="7.4" text-anchor="middle" fill="#333" textLength="30" lengthAdjust="spacingAndGlyphs">GRY/RED</text>
<circle cx="455" cy="648" r="5.6" fill="#000"/>
<path d="M505.5,595.3 L505.5,666" fill="none" stroke="#9a9a9a" stroke-width="5.8" stroke-linejoin="miter" stroke-linecap="butt"/>
<path d="M505.5,595.3 L505.5,666" fill="none" stroke="#2676c4" stroke-width="1.8" stroke-linejoin="miter"/>
<path d="M505.5,678 L505.5,703.8" fill="none" stroke="#9a9a9a" stroke-width="5.8" stroke-linejoin="miter" stroke-linecap="butt"/>
<path d="M505.5,678 L505.5,703.8" fill="none" stroke="#2676c4" stroke-width="1.8" stroke-linejoin="miter"/>
<text x="505" y="675.5" font-size="7.4" text-anchor="middle" fill="#333" textLength="30" lengthAdjust="spacingAndGlyphs">GRY/BLU</text>
<path d="M564,595.3 L564,665" fill="none" stroke="#1dac68" stroke-width="5.6" stroke-linejoin="miter" stroke-linecap="butt"/>
<path d="M564,678 L564,703.4" fill="none" stroke="#1dac68" stroke-width="5.6" stroke-linejoin="miter" stroke-linecap="butt"/>
<text x="564" y="675.5" font-size="7.4" text-anchor="middle" fill="#333" textLength="25" lengthAdjust="spacingAndGlyphs">LT GRN</text>
<path d="M651,595.3 L651,665" fill="none" stroke="#1dac68" stroke-width="5.6" stroke-linejoin="miter" stroke-linecap="butt"/>
<path d="M651,595.3 L651,665" fill="none" stroke="#111" stroke-width="1.2" stroke-linejoin="miter"/>
<path d="M651,678 L651,703.4" fill="none" stroke="#1dac68" stroke-width="5.6" stroke-linejoin="miter" stroke-linecap="butt"/>
<path d="M651,678 L651,703.4" fill="none" stroke="#111" stroke-width="1.2" stroke-linejoin="miter"/>
<text x="650.5" y="675.5" font-size="7.4" text-anchor="middle" fill="#333" textLength="40" lengthAdjust="spacingAndGlyphs">LT GRN/BLK</text>
<path d="M690.6,595.3 L690.6,665" fill="none" stroke="#f5a3bb" stroke-width="5.6" stroke-linejoin="miter" stroke-linecap="butt"/>
<path d="M690.6,595.3 L690.6,665" fill="none" stroke="#111" stroke-width="1.1" stroke-linejoin="miter"/>
<path d="M690.6,678 L690.6,703.4" fill="none" stroke="#f5a3bb" stroke-width="5.6" stroke-linejoin="miter" stroke-linecap="butt"/>
<path d="M690.6,678 L690.6,703.4" fill="none" stroke="#111" stroke-width="1.1" stroke-linejoin="miter"/>
<text x="690.5" y="675.5" font-size="7.4" text-anchor="middle" fill="#333" textLength="30" lengthAdjust="spacingAndGlyphs">PNK/BLK</text>
<text x="333" y="698.5" font-size="12" text-anchor="start" font-weight="bold" fill="#111">C24</text>
<text x="369" y="696.5" font-size="9.6" text-anchor="start" fill="#1a1a1a">1</text>
<text x="411" y="697.5" font-size="9.6" text-anchor="start" fill="#1a1a1a">3</text>
<path d="M369.5,699.5 L418.5,699.5 L418.5,772.5 L367.5,772.5" fill="none" stroke="#000" stroke-width="1.05" stroke-dasharray="3.2,2"/>
<rect x="343.75" y="703.4" width="70.75" height="63.8" rx="0" fill="none" stroke="#111" stroke-width="1.5"/>
<path d="M362.5,703.9 L362.5,735.5" fill="none" stroke="#000" stroke-width="1.15"/>
<circle cx="362" cy="718" r="1.8" fill="#000"/>
<circle cx="362" cy="729" r="1.8" fill="#000"/>
<path d="M362.5,718.5 L374.5,718.5" fill="none" stroke="#000" stroke-width="1.15"/>
<path d="M374.5,718.5 L376.08,715.5 L379.25,721.5 L382.42,715.5 L385.58,721.5 L388.75,715.5 L391.92,721.5 L393.5,718.5" fill="none" stroke="#000" stroke-width="0.9"/>
<path d="M393.5,718.5 L407.5,718.5 L407.5,703.9" fill="none" stroke="#000" stroke-width="1.15"/>
<circle cx="399" cy="718" r="1.8" fill="#000"/>
<path d="M399.5,718.5 L399.5,739.5" fill="none" stroke="#000" stroke-width="1.15"/>
<path d="M399.5,739.5 L403.5,740.67 L395.5,743 L403.5,745.33 L395.5,747.67 L403.5,750 L395.5,752.33 L399.5,753.5" fill="none" stroke="#000" stroke-width="0.9"/>
<path d="M399.5,753.5 L399.5,761.5" fill="none" stroke="#000" stroke-width="1.15"/>
<path d="M362.5,729.5 L382.5,729.5 L382.5,737.5" fill="none" stroke="#000" stroke-width="1.15"/>
<path d="M383,737.5 L387,738.83 L379,741.5 L387,744.17 L379,746.83 L387,749.5 L379,752.17 L383,753.5" fill="none" stroke="#000" stroke-width="0.9"/>
<path d="M382.5,753.5 L382.5,761.5" fill="none" stroke="#000" stroke-width="1.15"/>
<path d="M373.5,749.5 L373.5,761.5 L399.5,761.5" fill="none" stroke="#000" stroke-width="1.15"/>
<circle cx="382.5" cy="761" r="1.8" fill="#000"/>
<path d="M362.5,735.5 L349,748.5 L376.5,748.5 L362.5,735.5" fill="none" stroke="#000" stroke-width="1.1"/>
<path d="M352.5,749.5 L352.5,762.5" fill="none" stroke="#000" stroke-width="1.15"/>
<text x="367" y="784.5" font-size="9.6" text-anchor="start" fill="#1a1a1a">2</text>
<text x="377" y="782" font-size="8.7" text-anchor="start" fill="#1a1a1a">MAP sensor</text>
<text x="423" y="700.5" font-size="12" text-anchor="start" font-weight="bold" fill="#111">C23</text>
<text x="460" y="695.5" font-size="9.6" text-anchor="start" fill="#1a1a1a">1</text>
<text x="511" y="694.5" font-size="9.6" text-anchor="start" fill="#1a1a1a">2</text>
<path d="M462.5,699.5 L525.5,699.5 L525.5,773.5 L462.5,773.5" fill="none" stroke="#000" stroke-width="1.05" stroke-dasharray="3.2,2"/>
<rect x="440.3" y="703.75" width="78.9" height="63.25" rx="0" fill="none" stroke="#111" stroke-width="1.5"/>
<path d="M455.5,704.25 L455.5,722.5" fill="none" stroke="#000" stroke-width="1.15"/>
<path d="M455.5,722.5 L459,724.12 L452,727.38 L459,730.62 L452,733.88 L459,737.12 L452,740.38 L459,743.62 L452,746.88 L455.5,748.5" fill="none" stroke="#000" stroke-width="0.9"/>
<path d="M455.5,748.5 L455.5,767.5" fill="none" stroke="#000" stroke-width="1.15"/>
<path d="M505.5,704.25 L505.5,738.5 L467.5,738.5" fill="none" stroke="#000" stroke-width="1.15"/>
<path d="M461,738.5 l8,-3.5 v7 z" fill="#111"/>
<path d="M485.5,722.5 L485.5,754.5" fill="none" stroke="#000" stroke-width="0.8" stroke-dasharray="2,1.5"/>
<path d="M485,717 l-2.5,5 h5 z" fill="#111"/><path d="M485,759 l-2.5,-5 h5 z" fill="#111"/>
<text x="485" y="714" font-size="6.8" text-anchor="middle" fill="#1a1a1a">OPEN</text>
<text x="485" y="764" font-size="6.8" text-anchor="middle" fill="#1a1a1a">CLOSE</text>
<text x="460" y="785" font-size="9.6" text-anchor="start" fill="#1a1a1a">3</text>
<text x="476" y="781" font-size="8.7" text-anchor="start" fill="#1a1a1a">Throttle</text>
<text x="476" y="791" font-size="8.7" text-anchor="start" fill="#1a1a1a">position</text>
<text x="476" y="801" font-size="8.7" text-anchor="start" fill="#1a1a1a">sensor</text>
<text x="537" y="699.5" font-size="12" text-anchor="start" font-weight="bold" fill="#111">C25</text>
<text x="572" y="697.5" font-size="9.6" text-anchor="start" fill="#1a1a1a">2</text>
<path d="M570.5,699.5 L585.5,699.5 L585.5,773.5 L570.5,773.5" fill="none" stroke="#000" stroke-width="1.05" stroke-dasharray="3.2,2"/>
<rect x="550.5" y="703.4" width="28.9" height="66" rx="0" fill="none" stroke="#111" stroke-width="1.5"/>
<rect x="554" y="714" width="22" height="43" rx="11" fill="none" stroke="#111" stroke-width="1"/>
<path d="M564.5,703.9 L564.5,722.5" fill="none" stroke="#000" stroke-width="1.15"/>
<path d="M564.5,722.5 L569,724.67 L560,729 L569,733.33 L560,737.67 L569,742 L560,746.33 L564.5,748.5" fill="none" stroke="#000" stroke-width="0.9"/>
<path d="M564.5,748.5 L564.5,769.9" fill="none" stroke="#000" stroke-width="1.15"/>
<text x="589" y="734" font-size="8.7" text-anchor="start" fill="#1a1a1a">ECT</text>
<text x="589" y="744" font-size="8.7" text-anchor="start" fill="#1a1a1a">sensor</text>
<text x="572" y="786" font-size="9.6" text-anchor="start" fill="#1a1a1a">1</text>
<text x="620" y="700.5" font-size="12" text-anchor="start" font-weight="bold" fill="#111">C28</text>
<text x="658" y="697.5" font-size="9.6" text-anchor="start" fill="#1a1a1a">4</text>
<text x="700" y="697.5" font-size="9.6" text-anchor="start" fill="#1a1a1a">2</text>
<path d="M657.5,699.5 L717.5,699.5 L717.5,778.5 L657.5,778.5" fill="none" stroke="#000" stroke-width="1.05" stroke-dasharray="3.2,2"/>
<rect x="629.4" y="703.4" width="81.2" height="71.1" rx="0" fill="none" stroke="#111" stroke-width="1.5"/>
<text x="670" y="741" font-size="8.7" text-anchor="middle" fill="#1a1a1a">IAT</text>
<text x="670" y="751" font-size="8.7" text-anchor="middle" fill="#1a1a1a">sensor</text>
<text x="659" y="789.5" font-size="9.6" text-anchor="start" fill="#1a1a1a">1</text>
<text x="699" y="789.5" font-size="9.6" text-anchor="start" fill="#1a1a1a">3</text>
<path d="M362,767.2 L362,794" fill="none" stroke="#f0a000" stroke-width="5.6" stroke-linejoin="miter" stroke-linecap="butt"/>
<text x="362" y="805" font-size="7.4" text-anchor="middle" fill="#333" textLength="15" lengthAdjust="spacingAndGlyphs">ORN</text>
<path d="M362,808 L362,864 L651,864 L651,817" fill="none" stroke="#f0a000" stroke-width="5.6" stroke-linejoin="miter" stroke-linecap="butt"/>
<path d="M455,767 L455,794" fill="none" stroke="#f0a000" stroke-width="5.6" stroke-linejoin="miter" stroke-linecap="butt"/>
<path d="M455,808 L455,906.6" fill="none" stroke="#f0a000" stroke-width="5.6" stroke-linejoin="miter" stroke-linecap="butt"/>
<text x="455" y="805" font-size="7.4" text-anchor="middle" fill="#333" textLength="15" lengthAdjust="spacingAndGlyphs">ORN</text>
<path d="M564,769.4 L564,794" fill="none" stroke="#f0a000" stroke-width="5.6" stroke-linejoin="miter" stroke-linecap="butt"/>
<path d="M564,808 L564,864" fill="none" stroke="#f0a000" stroke-width="5.6" stroke-linejoin="miter" stroke-linecap="butt"/>
<text x="564" y="805" font-size="7.4" text-anchor="middle" fill="#333" textLength="15" lengthAdjust="spacingAndGlyphs">ORN</text>
<path d="M651,774.5 L651,803.4" fill="none" stroke="#f0a000" stroke-width="5.6" stroke-linejoin="miter" stroke-linecap="butt"/>
<text x="651" y="814" font-size="7.4" text-anchor="middle" fill="#333" textLength="15" lengthAdjust="spacingAndGlyphs">ORN</text>
<circle cx="455" cy="864" r="5.6" fill="#000"/>
<circle cx="564" cy="864" r="5.6" fill="#000"/>
<path d="M690.8,774.5 L690.8,803.4" fill="none" stroke="#111" stroke-width="5.4" stroke-linejoin="miter" stroke-linecap="butt"/>
<path d="M690.8,774.5 L690.8,803.4" fill="none" stroke="#d8102c" stroke-width="1.6" stroke-linejoin="miter"/>
<path d="M690.8,817 L690.8,836" fill="none" stroke="#111" stroke-width="5.4" stroke-linejoin="miter" stroke-linecap="butt"/>
<path d="M690.8,817 L690.8,836" fill="none" stroke="#d8102c" stroke-width="1.6" stroke-linejoin="miter"/>
<text x="690.8" y="814" font-size="7.4" text-anchor="middle" fill="#333" textLength="30" lengthAdjust="spacingAndGlyphs">BLK/RED</text>
<rect x="683.3" y="836" width="14.5" height="14.8" rx="0" fill="#e4e4e4" stroke="#222" stroke-width="1.3"/>
<text x="690.55" y="847.5" font-size="9" text-anchor="middle" fill="#1a1a1a">10</text>
<path d="M688,855.5 h5.5 M691,854 v3" stroke="#000" stroke-width="1" fill="none"/>
<path d="M687,855.5 l2.6,-2 v4 z" fill="#000"/>
<text x="426" y="901.5" font-size="12" text-anchor="start" font-weight="bold" fill="#111">C77</text>
<text x="463" y="901" font-size="9.6" text-anchor="start" fill="#1a1a1a">10</text>
<path d="M333.5,906.5 L477.5,906.5 L477.5,938.5 L333.5,938.5" fill="none" stroke="#000" stroke-width="1.3"/>
<rect x="333" y="917" width="14.5" height="15" rx="0" fill="#e4e4e4" stroke="#222" stroke-width="1.3"/>
<text x="340.25" y="928.7" font-size="9.5" text-anchor="middle" fill="#1a1a1a">4</text>
<path d="M338,913.5 h5.5 M341,912 v3" stroke="#000" stroke-width="1" fill="none"/>
<path d="M337,913.5 l2.6,-2 v4 z" fill="#000"/>
<path d="M348,923.5 L455.5,923.5 L455.5,907.1" fill="none" stroke="#000" stroke-width="1"/>
<text x="481" y="923" font-size="8.4" text-anchor="start" fill="#1a1a1a">J/C</text>
<text x="481" y="933" font-size="8.4" text-anchor="start" fill="#1a1a1a">#5-2</text>
<path d="M786,253 L786,271" fill="none" stroke="#111" stroke-width="5.4" stroke-linejoin="miter" stroke-linecap="butt"/>
<path d="M786,253 L786,271" fill="none" stroke="#d8102c" stroke-width="1.6" stroke-linejoin="miter"/>
<text x="792" y="266.5" font-size="9.6" text-anchor="start" fill="#1a1a1a">9</text>
<path d="M735,280.3 L735,271 L808,271 L808,338" fill="none" stroke="#111" stroke-width="5.6" stroke-linejoin="miter" stroke-linecap="butt"/>
<path d="M735,280.3 L735,271 L808,271 L808,338" fill="none" stroke="#d8102c" stroke-width="1.8" stroke-linejoin="miter"/>
<path d="M786,271 L786,280.3" fill="none" stroke="#111" stroke-width="5.4" stroke-linejoin="miter" stroke-linecap="butt"/>
<path d="M786,271 L786,280.3" fill="none" stroke="#d8102c" stroke-width="1.6" stroke-linejoin="miter"/>
<path d="M786,295 L786,338" fill="none" stroke="#111" stroke-width="5.4" stroke-linejoin="miter" stroke-linecap="butt"/>
<path d="M786,295 L786,338" fill="none" stroke="#d8102c" stroke-width="1.6" stroke-linejoin="miter"/>
<path d="M735,295 L735,357" fill="none" stroke="#111" stroke-width="5.6" stroke-linejoin="miter" stroke-linecap="butt"/>
<path d="M735,295 L735,357" fill="none" stroke="#d8102c" stroke-width="1.8" stroke-linejoin="miter"/>
<circle cx="786" cy="271" r="5.2" fill="#000"/>
<text x="735" y="292" font-size="7.4" text-anchor="middle" fill="#333" textLength="30" lengthAdjust="spacingAndGlyphs">BLK/RED</text>
<text x="786" y="292" font-size="7.4" text-anchor="middle" fill="#333" textLength="30" lengthAdjust="spacingAndGlyphs">BLK/RED</text>
<text x="707" y="352.5" font-size="12" text-anchor="start" font-weight="bold" fill="#111">C15</text>
<text x="742" y="351.5" font-size="9.6" text-anchor="start" fill="#1a1a1a">2</text>
<path d="M740.5,353.5 L757.5,353.5 L757.5,419.5 L740.5,419.5" fill="none" stroke="#000" stroke-width="1.05" stroke-dasharray="3.2,2"/>
<rect x="717.7" y="357" width="34.9" height="58.6" rx="0" fill="none" stroke="#111" stroke-width="1.5"/>
<path d="M734.5,357.5 L734.5,368.9" fill="none" stroke="#000" stroke-width="1.15"/>
<ellipse cx="733.5" cy="378.9" rx="6" ry="2.3" fill="none" stroke="#000" stroke-width="1"/>
<ellipse cx="733.5" cy="386.6" rx="6" ry="2.3" fill="none" stroke="#000" stroke-width="1"/>
<ellipse cx="733.5" cy="394.8" rx="6" ry="2.3" fill="none" stroke="#000" stroke-width="1"/>
<path d="M734.5,368.4 C740.5,368.4 740,375.9 739,378.9" fill="none" stroke="#000" stroke-width="1"/>
<path d="M739,394.8 C740,397.8 740.5,405 734.5,405" fill="none" stroke="#000" stroke-width="1"/>
<path d="M739,378.9 C741,379.9 741,385.6 739,386.6" fill="none" stroke="#000" stroke-width="1"/>
<path d="M739,386.6 C741,387.6 741,393.8 739,394.8" fill="none" stroke="#000" stroke-width="1"/>
<path d="M734.5,405.5 L734.5,416.1" fill="none" stroke="#000" stroke-width="1.15"/>
<text x="704.5" y="415" font-size="8.7" text-anchor="start" fill="#1a1a1a" transform="rotate(-90 704.5 415)">EVAP canister</text>
<text x="713" y="415" font-size="8.7" text-anchor="start" fill="#1a1a1a" transform="rotate(-90 713 415)">purge valve</text>
<text x="743" y="428.5" font-size="9.6" text-anchor="start" fill="#1a1a1a">1</text>
<path d="M735,415.6 L735,442.5" fill="none" stroke="#2676c4" stroke-width="5.6" stroke-linejoin="miter" stroke-linecap="butt"/>
<path d="M735,415.6 L735,442.5" fill="none" stroke="#111" stroke-width="1.2" stroke-linejoin="miter"/>
<path d="M735,456.6 L735,537.5" fill="none" stroke="#2676c4" stroke-width="5.6" stroke-linejoin="miter" stroke-linecap="butt"/>
<path d="M735,456.6 L735,537.5" fill="none" stroke="#111" stroke-width="1.2" stroke-linejoin="miter"/>
<text x="735" y="453.5" font-size="7.4" text-anchor="middle" fill="#333" textLength="30" lengthAdjust="spacingAndGlyphs">BLU/BLK</text>
<text x="755" y="336.5" font-size="12" text-anchor="start" font-weight="bold" fill="#111">C18</text>
<text x="793" y="330.5" font-size="9.6" text-anchor="start" fill="#1a1a1a">2</text>
<text x="816" y="330.5" font-size="9.6" text-anchor="start" fill="#1a1a1a">5</text>
<text x="846" y="319" font-size="8.7" text-anchor="start" fill="#1a1a1a">EGR</text>
<text x="846" y="330" font-size="8.7" text-anchor="start" fill="#1a1a1a">valve</text>
<path d="M792.5,332.5 L864.5,332.5 L864.5,420.5 L760.5,420.5" fill="none" stroke="#000" stroke-width="1.05" stroke-dasharray="3.2,2"/>
<rect x="761" y="338" width="98.4" height="78" rx="0" fill="none" stroke="#111" stroke-width="1.5"/>
<path d="M786.5,338.5 L786.5,397.5" fill="none" stroke="#000" stroke-width="1.15"/>
<circle cx="786" cy="398" r="2.2" fill="#000"/>
<ellipse cx="777.7" cy="403" rx="2.3" ry="5" fill="none" stroke="#000" stroke-width="1"/>
<ellipse cx="785.9" cy="403" rx="2.3" ry="5" fill="none" stroke="#000" stroke-width="1"/>
<ellipse cx="793.5" cy="403" rx="2.3" ry="5" fill="none" stroke="#000" stroke-width="1"/>
<path d="M767.5,415 V403 C767.5,397 774.7,397.5 777.7,398" fill="none" stroke="#000" stroke-width="1"/>
<path d="M793.5,398 C796.5,397.5 804.5,397 804.5,403 V415" fill="none" stroke="#000" stroke-width="1"/>
<path d="M777.7,398 C778.7,396.5 784.9,396.5 785.9,398" fill="none" stroke="#000" stroke-width="1"/>
<path d="M785.9,398 C786.9,396.5 792.5,396.5 793.5,398" fill="none" stroke="#000" stroke-width="1"/>
<path d="M808.5,338.5 L808.5,366.5 L820.5,366.5" fill="none" stroke="#000" stroke-width="1.15"/>
<circle cx="820.5" cy="367" r="2.4" fill="#000"/>
<ellipse cx="825.5" cy="359" rx="6" ry="2.3" fill="none" stroke="#000" stroke-width="1"/>
<ellipse cx="825.5" cy="367" rx="6" ry="2.3" fill="none" stroke="#000" stroke-width="1"/>
<ellipse cx="825.5" cy="375.7" rx="6" ry="2.3" fill="none" stroke="#000" stroke-width="1"/>
<path d="M825.5,348.5 C818.5,348.5 819,356 820,359" fill="none" stroke="#000" stroke-width="1"/>
<path d="M820,375.7 C819,378.7 818.5,385 825.5,385" fill="none" stroke="#000" stroke-width="1"/>
<path d="M820,359 C818,360 818,366 820,367" fill="none" stroke="#000" stroke-width="1"/>
<path d="M820,367 C818,368 818,374.7 820,375.7" fill="none" stroke="#000" stroke-width="1"/>
<path d="M825.5,348.5 L852.5,348.5 L852.5,416.5" fill="none" stroke="#000" stroke-width="1.15"/>
<path d="M825.5,385.5 L825.5,416.5" fill="none" stroke="#000" stroke-width="1.15"/>
<text x="774" y="431.5" font-size="9.6" text-anchor="start" fill="#1a1a1a">3</text>
<text x="811" y="431.5" font-size="9.6" text-anchor="start" fill="#1a1a1a">1</text>
<text x="830" y="431.5" font-size="9.6" text-anchor="start" fill="#1a1a1a">4</text>
<text x="859" y="431.5" font-size="9.6" text-anchor="start" fill="#1a1a1a">6</text>
<path d="M767.7,416 L767.7,494" fill="none" stroke="#169a48" stroke-width="5.6" stroke-linejoin="miter" stroke-linecap="butt"/>
<path d="M767.7,416 L767.7,494" fill="none" stroke="#d8102c" stroke-width="1.6" stroke-linejoin="miter"/>
<path d="M767.7,508 L767.7,537.5" fill="none" stroke="#169a48" stroke-width="5.6" stroke-linejoin="miter" stroke-linecap="butt"/>
<path d="M767.7,508 L767.7,537.5" fill="none" stroke="#d8102c" stroke-width="1.6" stroke-linejoin="miter"/>
<text x="767" y="505.5" font-size="7.4" text-anchor="middle" fill="#333" textLength="31" lengthAdjust="spacingAndGlyphs">GRN/RED</text>
<path d="M804.4,416 L804.4,442.5" fill="none" stroke="#169a48" stroke-width="5.8" stroke-linejoin="miter" stroke-linecap="butt"/>
<path d="M804.4,416 L804.4,442.5" fill="none" stroke="#f0a000" stroke-width="1.8" stroke-linejoin="miter"/>
<path d="M804.4,456.6 L804.4,537.5" fill="none" stroke="#169a48" stroke-width="5.8" stroke-linejoin="miter" stroke-linecap="butt"/>
<path d="M804.4,456.6 L804.4,537.5" fill="none" stroke="#f0a000" stroke-width="1.8" stroke-linejoin="miter"/>
<text x="804" y="453.5" font-size="7.4" text-anchor="middle" fill="#333" textLength="33" lengthAdjust="spacingAndGlyphs">GRN/ORN</text>
<path d="M825,416 L825,494" fill="none" stroke="#aaa" stroke-width="5.2" stroke-linejoin="miter" stroke-linecap="butt"/>
<path d="M825,416 L825,494" fill="none" stroke="#ffffff" stroke-width="3.6" stroke-linejoin="miter"/>
<path d="M825,508 L825,537.5" fill="none" stroke="#aaa" stroke-width="5.2" stroke-linejoin="miter" stroke-linecap="butt"/>
<path d="M825,508 L825,537.5" fill="none" stroke="#ffffff" stroke-width="3.6" stroke-linejoin="miter"/>
<path d="M825,416 L825,494" fill="none" stroke="#d8102c" stroke-width="1.6" stroke-linejoin="miter" stroke-linecap="butt"/>
<path d="M825,508 L825,537.5" fill="none" stroke="#d8102c" stroke-width="1.6" stroke-linejoin="miter" stroke-linecap="butt"/>
<text x="825" y="505.5" font-size="7.4" text-anchor="middle" fill="#333" textLength="32" lengthAdjust="spacingAndGlyphs">WHT/RED</text>
<path d="M852,416 L852,442.5" fill="none" stroke="#a8642c" stroke-width="5.8" stroke-linejoin="miter" stroke-linecap="butt"/>
<path d="M852,416 L852,442.5" fill="none" stroke="#ecc400" stroke-width="2.4" stroke-linejoin="miter"/>
<path d="M852,456.6 L852,537.5" fill="none" stroke="#a8642c" stroke-width="5.8" stroke-linejoin="miter" stroke-linecap="butt"/>
<path d="M852,456.6 L852,537.5" fill="none" stroke="#ecc400" stroke-width="2.4" stroke-linejoin="miter"/>
<text x="852" y="453.5" font-size="7.4" text-anchor="middle" fill="#333" textLength="30" lengthAdjust="spacingAndGlyphs">BRN/YEL</text>
<text x="885" y="260" font-size="8.7" text-anchor="middle" fill="#1a1a1a">Starting</text>
<text x="885" y="270" font-size="8.7" text-anchor="middle" fill="#1a1a1a">motor</text>
<path d="M873.5,274.1 C871,270.3 864,271.3 864,275.3 M873.5,276.5 C871,280.3 864,279.3 864,275.3" fill="none" stroke="#000" stroke-width="0.9"/>
<circle cx="870.3" cy="275.5" r="2.4" fill="#000"/>
<circle cx="870.8" cy="274.8" r="0.7" fill="#fff"/>
<path d="M874.5,275.8 h10" stroke="#000" stroke-width="0.8" stroke-dasharray="1.6,1"/>
<path d="M887,275.8 l-4,-1.6 v3.2 z" fill="#000"/>
<text x="888" y="279.1" font-size="8.8" text-anchor="start" fill="#1a1a1a" letter-spacing="0.3">"A-1"</text>
<path d="M885,296 L885,494" fill="none" stroke="#111" stroke-width="5.6" stroke-linejoin="miter" stroke-linecap="butt"/>
<path d="M885,296 L885,494" fill="none" stroke="#b8a400" stroke-width="2" stroke-linejoin="miter"/>
<path d="M885,508 L885,537.5" fill="none" stroke="#111" stroke-width="5.6" stroke-linejoin="miter" stroke-linecap="butt"/>
<path d="M885,508 L885,537.5" fill="none" stroke="#b8a400" stroke-width="2" stroke-linejoin="miter"/>
<text x="885" y="505.5" font-size="7.4" text-anchor="middle" fill="#333" textLength="30" lengthAdjust="spacingAndGlyphs">BLK/YEL</text>
<path d="M907.2,250.7 A26.4,19 0 0 1 960,250.7 Z" fill="#fff" stroke="#000" stroke-width="1.3"/>
<rect x="907.5" y="248.3" width="52.2" height="3.2" fill="#000"/>
<rect x="910.37" y="249.3" width="6.86" height="1" fill="#fff"/>
<rect x="918.82" y="249.3" width="5.28" height="1" fill="#fff"/>
<rect x="926.21" y="249.3" width="14.26" height="1" fill="#fff"/>
<rect x="942.58" y="249.3" width="5.28" height="1" fill="#fff"/>
<rect x="949.97" y="249.3" width="6.86" height="1" fill="#fff"/>
<path d="M921.55,234.3 Q933.6,232.3 945.65,234.3" fill="none" stroke="#000" stroke-width="0.8"/>
<path d="M930.39,235.9 C932.6,239.7 932.6,243.7 930.79,248.7 H936.41 C934.6,243.7 934.6,239.7 936.81,235.9 Z" fill="#fff" stroke="#000" stroke-width="0.9"/>
<rect x="930.09" y="234.1" width="7.03" height="1.6" fill="#fff" stroke="#000" stroke-width="0.8"/>
<circle cx="924.26" cy="242.4" r="6.93" fill="none" stroke="#000" stroke-width="1"/>
<circle cx="924.26" cy="242.4" r="6.02" fill="none" stroke="#000" stroke-width="0.8" stroke-dasharray="0.7,0.7"/>
<path d="M919.75,247.9 L925.56,243.1" fill="none" stroke="#000" stroke-width="1"/>
<circle cx="925.46" cy="242" r="1.3" fill="#fff" stroke="#000" stroke-width="0.8"/>
<circle cx="942.94" cy="242.4" r="6.93" fill="none" stroke="#000" stroke-width="1"/>
<circle cx="942.94" cy="242.4" r="6.02" fill="none" stroke="#000" stroke-width="0.8" stroke-dasharray="0.7,0.7"/>
<path d="M938.42,247.9 L944.24,243.1" fill="none" stroke="#000" stroke-width="1"/>
<circle cx="944.14" cy="242" r="1.3" fill="#fff" stroke="#000" stroke-width="0.8"/>
<path d="M908.71,248.2 a4,4 0 0 1 6.02,-1" fill="none" stroke="#000" stroke-width="1.1" stroke-dasharray="0.9,0.5"/>
<path d="M952.47,248.2 a4,4 0 0 1 6.02,-1" fill="none" stroke="#000" stroke-width="1.1" stroke-dasharray="0.9,0.5"/>
<text x="934" y="265.5" font-size="8.7" text-anchor="middle" fill="#1a1a1a">(IMMOBI)</text>
<path d="M922.5,274.1 C920,270.3 913,271.3 913,275.3 M922.5,276.5 C920,280.3 913,279.3 913,275.3" fill="none" stroke="#000" stroke-width="0.9"/>
<circle cx="919.3" cy="275.5" r="2.4" fill="#000"/>
<circle cx="919.8" cy="274.8" r="0.7" fill="#fff"/>
<path d="M923.5,275.8 h10" stroke="#000" stroke-width="0.8" stroke-dasharray="1.6,1"/>
<path d="M936,275.8 l-4,-1.6 v3.2 z" fill="#000"/>
<text x="937" y="279.1" font-size="8.8" text-anchor="start" fill="#1a1a1a" letter-spacing="0.3">"C-3"</text>
<path d="M936,296 L936,494" fill="none" stroke="#1dac68" stroke-width="5.6" stroke-linejoin="miter" stroke-linecap="butt"/>
<path d="M936,296 L936,494" fill="none" stroke="#111" stroke-width="1.4" stroke-linejoin="miter"/>
<path d="M936,508 L936,537.5" fill="none" stroke="#1dac68" stroke-width="5.6" stroke-linejoin="miter" stroke-linecap="butt"/>
<path d="M936,508 L936,537.5" fill="none" stroke="#111" stroke-width="1.4" stroke-linejoin="miter"/>
<text x="934.5" y="505.5" font-size="7.4" text-anchor="middle" fill="#333" textLength="41" lengthAdjust="spacingAndGlyphs">LT GRN/BLK</text>
<g transform="translate(756.5,622) rotate(10) scale(1,1)"><path d="M-10,0 L-2.5,-8.5 L-2.5,-5.5 L8.5,-6.5 L9,5.5 L-2.5,6 L-2.5,9 Z" fill="#fff" stroke="#1a1a1a" stroke-width="0.9"/></g>
<text x="757.5" y="625.6" font-size="9.5" text-anchor="middle" fill="#1a1a1a">7</text>
<g transform="translate(822.5,626) rotate(15) scale(1,1)"><path d="M-10,0 L-2.5,-8.5 L-2.5,-5.5 L8.5,-6.5 L9,5.5 L-2.5,6 L-2.5,9 Z" fill="#fff" stroke="#1a1a1a" stroke-width="0.9"/></g>
<text x="823.5" y="629.6" font-size="9.5" text-anchor="middle" fill="#1a1a1a">6</text>
<path d="M760.4,630 L760.4,680" fill="none" stroke="#111" stroke-width="5.4" stroke-linejoin="miter" stroke-linecap="butt"/>
<path d="M760.4,630 L760.4,680" fill="none" stroke="#f0a000" stroke-width="1.8" stroke-linejoin="miter"/>
<path d="M760.4,694 L760.4,926.5" fill="none" stroke="#111" stroke-width="5.4" stroke-linejoin="miter" stroke-linecap="butt"/>
<path d="M760.4,694 L760.4,926.5" fill="none" stroke="#f0a000" stroke-width="1.8" stroke-linejoin="miter"/>
<text x="762" y="690.5" font-size="7.4" text-anchor="middle" fill="#333" textLength="30" lengthAdjust="spacingAndGlyphs">BLK/ORN</text>
<path d="M795,595.3 L795,680" fill="none" stroke="#222" stroke-width="5.8" stroke-linejoin="miter" stroke-linecap="butt"/>
<path d="M795,595.3 L795,680" fill="none" stroke="#f4ee00" stroke-width="4.2" stroke-linejoin="miter"/>
<path d="M795,595.3 L795,680" fill="none" stroke="#222" stroke-width="0.9" stroke-linejoin="miter" stroke-linecap="butt"/>
<path d="M795,694 L795,902 L762,926" fill="none" stroke="#222" stroke-width="5.8" stroke-linejoin="miter" stroke-linecap="butt"/>
<path d="M795,694 L795,902 L762,926" fill="none" stroke="#f4ee00" stroke-width="4.2" stroke-linejoin="miter"/>
<path d="M795,694 L795,902 L762,926" fill="none" stroke="#222" stroke-width="0.9" stroke-linejoin="miter" stroke-linecap="butt"/>
<text x="797" y="690.5" font-size="7.4" text-anchor="middle" fill="#333" textLength="29" lengthAdjust="spacingAndGlyphs">YEL/BLK</text>
<path d="M828,633 L828,773 L795,773" fill="none" stroke="#222" stroke-width="5.8" stroke-linejoin="miter" stroke-linecap="butt"/>
<path d="M828,633 L828,773 L795,773" fill="none" stroke="#f4ee00" stroke-width="4.2" stroke-linejoin="miter"/>
<path d="M828,633 L828,773 L795,773" fill="none" stroke="#222" stroke-width="0.9" stroke-linejoin="miter" stroke-linecap="butt"/>
<circle cx="795" cy="773" r="5.6" fill="#000"/>
<circle cx="760" cy="933" r="4.6" fill="#fff" stroke="#111" stroke-width="1.1"/>
<path d="M752,938.8 L768,938.8" fill="none" stroke="#000" stroke-width="1.6"/>
<path d="M754.5,943.5 L757.5,940" fill="none" stroke="#000" stroke-width="1"/>
<path d="M758.5,943.5 L761.5,940" fill="none" stroke="#000" stroke-width="1"/>
<path d="M762.5,943.5 L765.5,940" fill="none" stroke="#000" stroke-width="1"/>
<circle cx="760" cy="956.6" r="7.5" fill="#000"/>
<text x="760" y="960.5" font-size="10" text-anchor="middle" fill="#fff">4</text>
<path d="M351,254.2 L353.2,254.7 L358,259.3 L362.8,254.7 L365,254.2" fill="none" stroke="#000" stroke-width="1" stroke-linejoin="round"/>
<path d="M351,321.8 L353.2,321.3 L358,316.7 L362.8,321.3 L365,321.8" fill="none" stroke="#000" stroke-width="1" stroke-linejoin="round"/>
<path d="M351,386.2 L353.2,386.7 L358,391.3 L362.8,386.7 L365,386.2" fill="none" stroke="#000" stroke-width="1" stroke-linejoin="round"/>
<path d="M394,386.2 L396.2,386.7 L401,391.3 L405.8,386.7 L408,386.2" fill="none" stroke="#000" stroke-width="1" stroke-linejoin="round"/>
<path d="M394,459.8 L396.2,459.3 L401,454.7 L405.8,459.3 L408,459.8" fill="none" stroke="#000" stroke-width="1" stroke-linejoin="round"/>
<path d="M394,486.2 L396.2,486.7 L401,491.3 L405.8,486.7 L408,486.2" fill="none" stroke="#000" stroke-width="1" stroke-linejoin="round"/>
<path d="M443,440 L461,440 L452,453 Z" fill="#000"/>
<text x="452" y="447" font-size="7" text-anchor="middle" font-weight="bold" fill="#fff">Y</text>
<path d="M487,321.8 L489.2,321.3 L494,316.7 L498.8,321.3 L501,321.8" fill="none" stroke="#000" stroke-width="1" stroke-linejoin="round"/>
<path d="M487,387.2 L489.2,387.7 L494,392.3 L498.8,387.7 L501,387.2" fill="none" stroke="#000" stroke-width="1" stroke-linejoin="round"/>
<path d="M530,387.2 L532.2,387.7 L537,392.3 L541.8,387.7 L544,387.2" fill="none" stroke="#000" stroke-width="1" stroke-linejoin="round"/>
<path d="M571,364 L589,364 L580,377.5 Z" fill="#000"/>
<text x="580" y="371" font-size="7" text-anchor="middle" font-weight="bold" fill="#fff">P</text>
<path d="M605.5,425.6 L623.5,425.6 L614.5,438.5 Z" fill="#000"/>
<text x="614.5" y="432.6" font-size="7" text-anchor="middle" font-weight="bold" fill="#fff">P</text>
<path d="M658,425.6 L676,425.6 L667,438.5 Z" fill="#000"/>
<text x="667" y="432.6" font-size="7" text-anchor="middle" font-weight="bold" fill="#fff">P</text>
<path d="M394,536.8 L396.2,536.3 L401,531.7 L405.8,536.3 L408,536.8" fill="none" stroke="#000" stroke-width="1" stroke-linejoin="round"/>
<path d="M530,536.8 L532.2,536.3 L537,531.7 L541.8,536.3 L544,536.8" fill="none" stroke="#000" stroke-width="1" stroke-linejoin="round"/>
<path d="M660,536.8 L662.2,536.3 L667,531.7 L671.8,536.3 L674,536.8" fill="none" stroke="#000" stroke-width="1" stroke-linejoin="round"/>
<path d="M728,536.8 L730.2,536.3 L735,531.7 L739.8,536.3 L742,536.8" fill="none" stroke="#000" stroke-width="1" stroke-linejoin="round"/>
<path d="M760.7,536.8 L762.9,536.3 L767.7,531.7 L772.5,536.3 L774.7,536.8" fill="none" stroke="#000" stroke-width="1" stroke-linejoin="round"/>
<path d="M797.4,536.8 L799.6,536.3 L804.4,531.7 L809.2,536.3 L811.4,536.8" fill="none" stroke="#000" stroke-width="1" stroke-linejoin="round"/>
<path d="M818,536.8 L820.2,536.3 L825,531.7 L829.8,536.3 L832,536.8" fill="none" stroke="#000" stroke-width="1" stroke-linejoin="round"/>
<path d="M845,536.8 L847.2,536.3 L852,531.7 L856.8,536.3 L859,536.8" fill="none" stroke="#000" stroke-width="1" stroke-linejoin="round"/>
<path d="M878,536.8 L880.2,536.3 L885,531.7 L889.8,536.3 L892,536.8" fill="none" stroke="#000" stroke-width="1" stroke-linejoin="round"/>
<path d="M929,536.8 L931.2,536.3 L936,531.7 L940.8,536.3 L943,536.8" fill="none" stroke="#000" stroke-width="1" stroke-linejoin="round"/>
<path d="M355,599.2 L357.2,599.7 L362,604.3 L366.8,599.7 L369,599.2" fill="none" stroke="#000" stroke-width="1" stroke-linejoin="round"/>
<path d="M448,599.2 L450.2,599.7 L455,604.3 L459.8,599.7 L462,599.2" fill="none" stroke="#000" stroke-width="1" stroke-linejoin="round"/>
<path d="M498.5,599.2 L500.7,599.7 L505.5,604.3 L510.3,599.7 L512.5,599.2" fill="none" stroke="#000" stroke-width="1" stroke-linejoin="round"/>
<path d="M557,599.2 L559.2,599.7 L564,604.3 L568.8,599.7 L571,599.2" fill="none" stroke="#000" stroke-width="1" stroke-linejoin="round"/>
<path d="M644,599.2 L646.2,599.7 L651,604.3 L655.8,599.7 L658,599.2" fill="none" stroke="#000" stroke-width="1" stroke-linejoin="round"/>
<path d="M683.6,599.2 L685.8,599.7 L690.6,604.3 L695.4,599.7 L697.6,599.2" fill="none" stroke="#000" stroke-width="1" stroke-linejoin="round"/>
<path d="M787.5,599.2 L789.7,599.7 L794.5,604.3 L799.3,599.7 L801.5,599.2" fill="none" stroke="#000" stroke-width="1" stroke-linejoin="round"/>
<path d="M355,702.8 L357.2,702.3 L362,697.7 L366.8,702.3 L369,702.8" fill="none" stroke="#000" stroke-width="1" stroke-linejoin="round"/>
<path d="M400,702.8 L402.2,702.3 L407,697.7 L411.8,702.3 L414,702.8" fill="none" stroke="#000" stroke-width="1" stroke-linejoin="round"/>
<path d="M355,770.2 L357.2,770.7 L362,775.3 L366.8,770.7 L369,770.2" fill="none" stroke="#000" stroke-width="1" stroke-linejoin="round"/>
<path d="M448,702.8 L450.2,702.3 L455,697.7 L459.8,702.3 L462,702.8" fill="none" stroke="#000" stroke-width="1" stroke-linejoin="round"/>
<path d="M498.5,702.8 L500.7,702.3 L505.5,697.7 L510.3,702.3 L512.5,702.8" fill="none" stroke="#000" stroke-width="1" stroke-linejoin="round"/>
<path d="M448,770.2 L450.2,770.7 L455,775.3 L459.8,770.7 L462,770.2" fill="none" stroke="#000" stroke-width="1" stroke-linejoin="round"/>
<path d="M557,702.8 L559.2,702.3 L564,697.7 L568.8,702.3 L571,702.8" fill="none" stroke="#000" stroke-width="1" stroke-linejoin="round"/>
<path d="M557,771.2 L559.2,771.7 L564,776.3 L568.8,771.7 L571,771.2" fill="none" stroke="#000" stroke-width="1" stroke-linejoin="round"/>
<path d="M644,702.8 L646.2,702.3 L651,697.7 L655.8,702.3 L658,702.8" fill="none" stroke="#000" stroke-width="1" stroke-linejoin="round"/>
<path d="M683.6,702.8 L685.8,702.3 L690.6,697.7 L695.4,702.3 L697.6,702.8" fill="none" stroke="#000" stroke-width="1" stroke-linejoin="round"/>
<path d="M644,776.2 L646.2,776.7 L651,781.3 L655.8,776.7 L658,776.2" fill="none" stroke="#000" stroke-width="1" stroke-linejoin="round"/>
<path d="M683.8,776.2 L686,776.7 L690.8,781.3 L695.6,776.7 L697.8,776.2" fill="none" stroke="#000" stroke-width="1" stroke-linejoin="round"/>
<path d="M448,906.3 L450.2,905.8 L455,901.2 L459.8,905.8 L462,906.3" fill="none" stroke="#000" stroke-width="1" stroke-linejoin="round"/>
<path d="M779,254.2 L781.2,254.7 L786,259.3 L790.8,254.7 L793,254.2" fill="none" stroke="#000" stroke-width="1" stroke-linejoin="round"/>
<path d="M728,356.8 L730.2,356.3 L735,351.7 L739.8,356.3 L742,356.8" fill="none" stroke="#000" stroke-width="1" stroke-linejoin="round"/>
<path d="M728,417.2 L730.2,417.7 L735,422.3 L739.8,417.7 L742,417.2" fill="none" stroke="#000" stroke-width="1" stroke-linejoin="round"/>
<path d="M779,336.3 L781.2,335.8 L786,331.2 L790.8,335.8 L793,336.3" fill="none" stroke="#000" stroke-width="1" stroke-linejoin="round"/>
<path d="M801,336.3 L803.2,335.8 L808,331.2 L812.8,335.8 L815,336.3" fill="none" stroke="#000" stroke-width="1" stroke-linejoin="round"/>
<path d="M760.7,418.2 L762.9,418.7 L767.7,423.3 L772.5,418.7 L774.7,418.2" fill="none" stroke="#000" stroke-width="1" stroke-linejoin="round"/>
<path d="M797.4,418.2 L799.6,418.7 L804.4,423.3 L809.2,418.7 L811.4,418.2" fill="none" stroke="#000" stroke-width="1" stroke-linejoin="round"/>
<path d="M818,418.2 L820.2,418.7 L825,423.3 L829.8,418.7 L832,418.2" fill="none" stroke="#000" stroke-width="1" stroke-linejoin="round"/>
<path d="M845,418.2 L847.2,418.7 L852,423.3 L856.8,418.7 L859,418.2" fill="none" stroke="#000" stroke-width="1" stroke-linejoin="round"/>
<path d="M876,283.3 L894,283.3 L885,296 Z" fill="#000"/>
<text x="885" y="290.3" font-size="7" text-anchor="middle" font-weight="bold" fill="#fff">BY</text>
<path d="M927,283.3 L945,283.3 L936,296 Z" fill="#000"/>
<text x="936" y="290.3" font-size="7" text-anchor="middle" font-weight="bold" fill="#fff">LB</text></svg>
<div class="abs" id="task"></div>
<svg class="abs" style="left:0;top:997px" width="1280" height="27">
 <circle cx="16" cy="13" r="11" fill="#fff"/>
 <circle cx="16" cy="13" r="9.3" fill="#79b547"/>
 <path d="M11,8 v7.5 q0,2 2,2 h6 q2,0 2,-2 v-4 q0,-2 -2,-2 q-1.6,0 -2,1.5 q-0.4,-1.5 -2,-1.5 q-1.2,0 -1.5,0.8" fill="none" stroke="#fff" stroke-width="1.6"/>
 <rect x="76" y="3" width="22" height="19" rx="1.5" fill="#84ad55"/>
 <rect x="77" y="6" width="20" height="1.5" fill="#4e6e30"/>
 <rect x="104" y="5" width="1" height="19" fill="#222"/>
 <rect x="111" y="7" width="22" height="15" rx="1.5" fill="#84ad55"/>
 <path d="M114,6.5 h3 l1,-1.5 h4 l1,1.5 h7 v1.5 h-16z" fill="#f0f0f0"/>
 <rect x="139" y="3" width="20.5" height="21" rx="3" fill="#232323" stroke="#111" stroke-width="1"/>
 <text x="140.5" y="12.5" font-size="9" font-weight="bold" fill="#e8e8e8" font-family="Liberation Mono">$_</text>
 <rect x="166" y="3" width="20" height="21" rx="3" fill="#f38b3a"/>
 <circle cx="176" cy="14.5" r="6.6" fill="#fff"/>
 <path d="M172.5,13.5 q2,-3 6,-1.5 q-1,1.5 -3,1.5 q-1.5,0.5 -3,0z" fill="#f38b3a"/>
 <path d="M178,8 q4,1 4.5,5 q-1.5,-2.5 -4.5,-3z" fill="#f38b3a"/>
 <circle cx="196" cy="8.5" r="1.1" fill="#262626"/><circle cx="196" cy="14.5" r="1.1" fill="#262626"/><circle cx="196" cy="20.5" r="1.1" fill="#262626"/>
 <rect x="205" y="7" width="14" height="14" rx="2" fill="#3a4a78"/>
 <rect x="207" y="9.5" width="10" height="8.5" fill="#a8a8a8"/>
 <path d="M207,10 l5,4 l5,-4" fill="none" stroke="#777" stroke-width="0.8"/>
 <rect x="359" y="6" width="14" height="14" rx="2.5" fill="#f38b3a"/>
 <circle cx="366" cy="13.5" r="4.3" fill="#fff"/>
 <rect x="514" y="7" width="13.5" height="11" fill="#e0e0e0" stroke="#555" stroke-width="1"/>
 <rect x="514" y="7" width="13.5" height="2.5" fill="#4a7bc0"/>
 <rect x="668" y="9" width="16" height="12" rx="1.5" fill="#84ad55"/>
 <path d="M669,9 h4 l1,-1.5 h4 l1,1.5h5v1.5h-15z" fill="#f0f0f0"/>
 <rect x="819" y="0" width="155" height="27" fill="#91b26b"/>
 <rect x="825" y="5" width="11" height="15" fill="#f4f4f4"/>
 <rect x="827" y="7" width="4" height="3" fill="#333"/>
 <path d="M827,12 h7 M827,14 h7 M827,16 h6" stroke="#999" stroke-width="0.8"/>
 <path d="M1014,6 l9.5,-3 l9.5,3 v7 q0,6 -9.5,10 q-9.5,-4 -9.5,-10z" fill="#e8e8e8" stroke="#777" stroke-width="1"/>
 <path d="M1018,13 l4,5 l8,-11" fill="none" stroke="#5a9e1a" stroke-width="2.6"/>
 <rect x="1041" y="6" width="19" height="18" rx="2" fill="none" stroke="#ddd" stroke-width="2"/>
 <rect x="1046" y="3" width="9" height="5" rx="1" fill="#2f2f2f" stroke="#ddd" stroke-width="1.6"/>
 <rect x="1049.5" y="10" width="2" height="7" fill="#ddd"/><rect x="1049.5" y="19" width="2" height="2" fill="#ddd"/>
 <rect x="1066" y="4" width="20" height="20" rx="2" fill="none" stroke="#ddd" stroke-width="2"/>
 <path d="M1070,20 v-9 h3 v-3 h6 v3 h3 v9" fill="none" stroke="#ddd" stroke-width="1.6"/>
 <circle cx="1102" cy="13" r="10" fill="#fff"/>
 <circle cx="1102" cy="12.8" r="8.3" fill="#3cbb45"/>
 <path d="M1093,23 l2,-5 l4,3z" fill="#fff"/>
 <path d="M1098.5,9 q0,6 7,8.5 l1.5,-2 l-2.5,-1.5 l-1,1 q-2.5,-1 -3.5,-3.5 l1,-1 l-1.5,-2.5z" fill="#fff"/>
 <path d="M1116,10 h4 l6,-5 v17 l-6,-5 h-4z" fill="#ddd"/>
 <path d="M1128.5,9.5 q2,3.5 0,7 M1131.5,6.5 q4,6.5 0,13 M1134.5,4 q5.5,9 0,18" fill="none" stroke="#ddd" stroke-width="1.6"/>
 <rect x="1149" y="7" width="10.5" height="14" fill="#d8d8d8"/>
 <rect x="1149" y="5" width="10.5" height="3" fill="#999"/>
 <path d="M1155.5,10 l-3,4.5 h2.5 l-1.5,3.5 l3.5,-5 h-2.5z" fill="#2f2f2f"/>
</svg>
<div class="abs tt" style="left:33px">Menu</div>
<div class="abs tt" style="left:228px">[Newsletters - dko…</div>
<div class="abs tt" style="left:382px">спидометр, подд…</div>
<div class="abs tt" style="left:537px">WhatsApp (от суп…</div>
<div class="abs tt" style="left:692px">Игнис</div>
<div class="abs tt" style="left:847px;color:#f4f4f4">wiring diagram 99…</div>
<div class="abs tt" style="left:992px;font-size:13px">en</div>
<div class="abs tt" style="left:1171px;font-size:13px">Вс, 19 фев, 00:27</div>
</body></html>
